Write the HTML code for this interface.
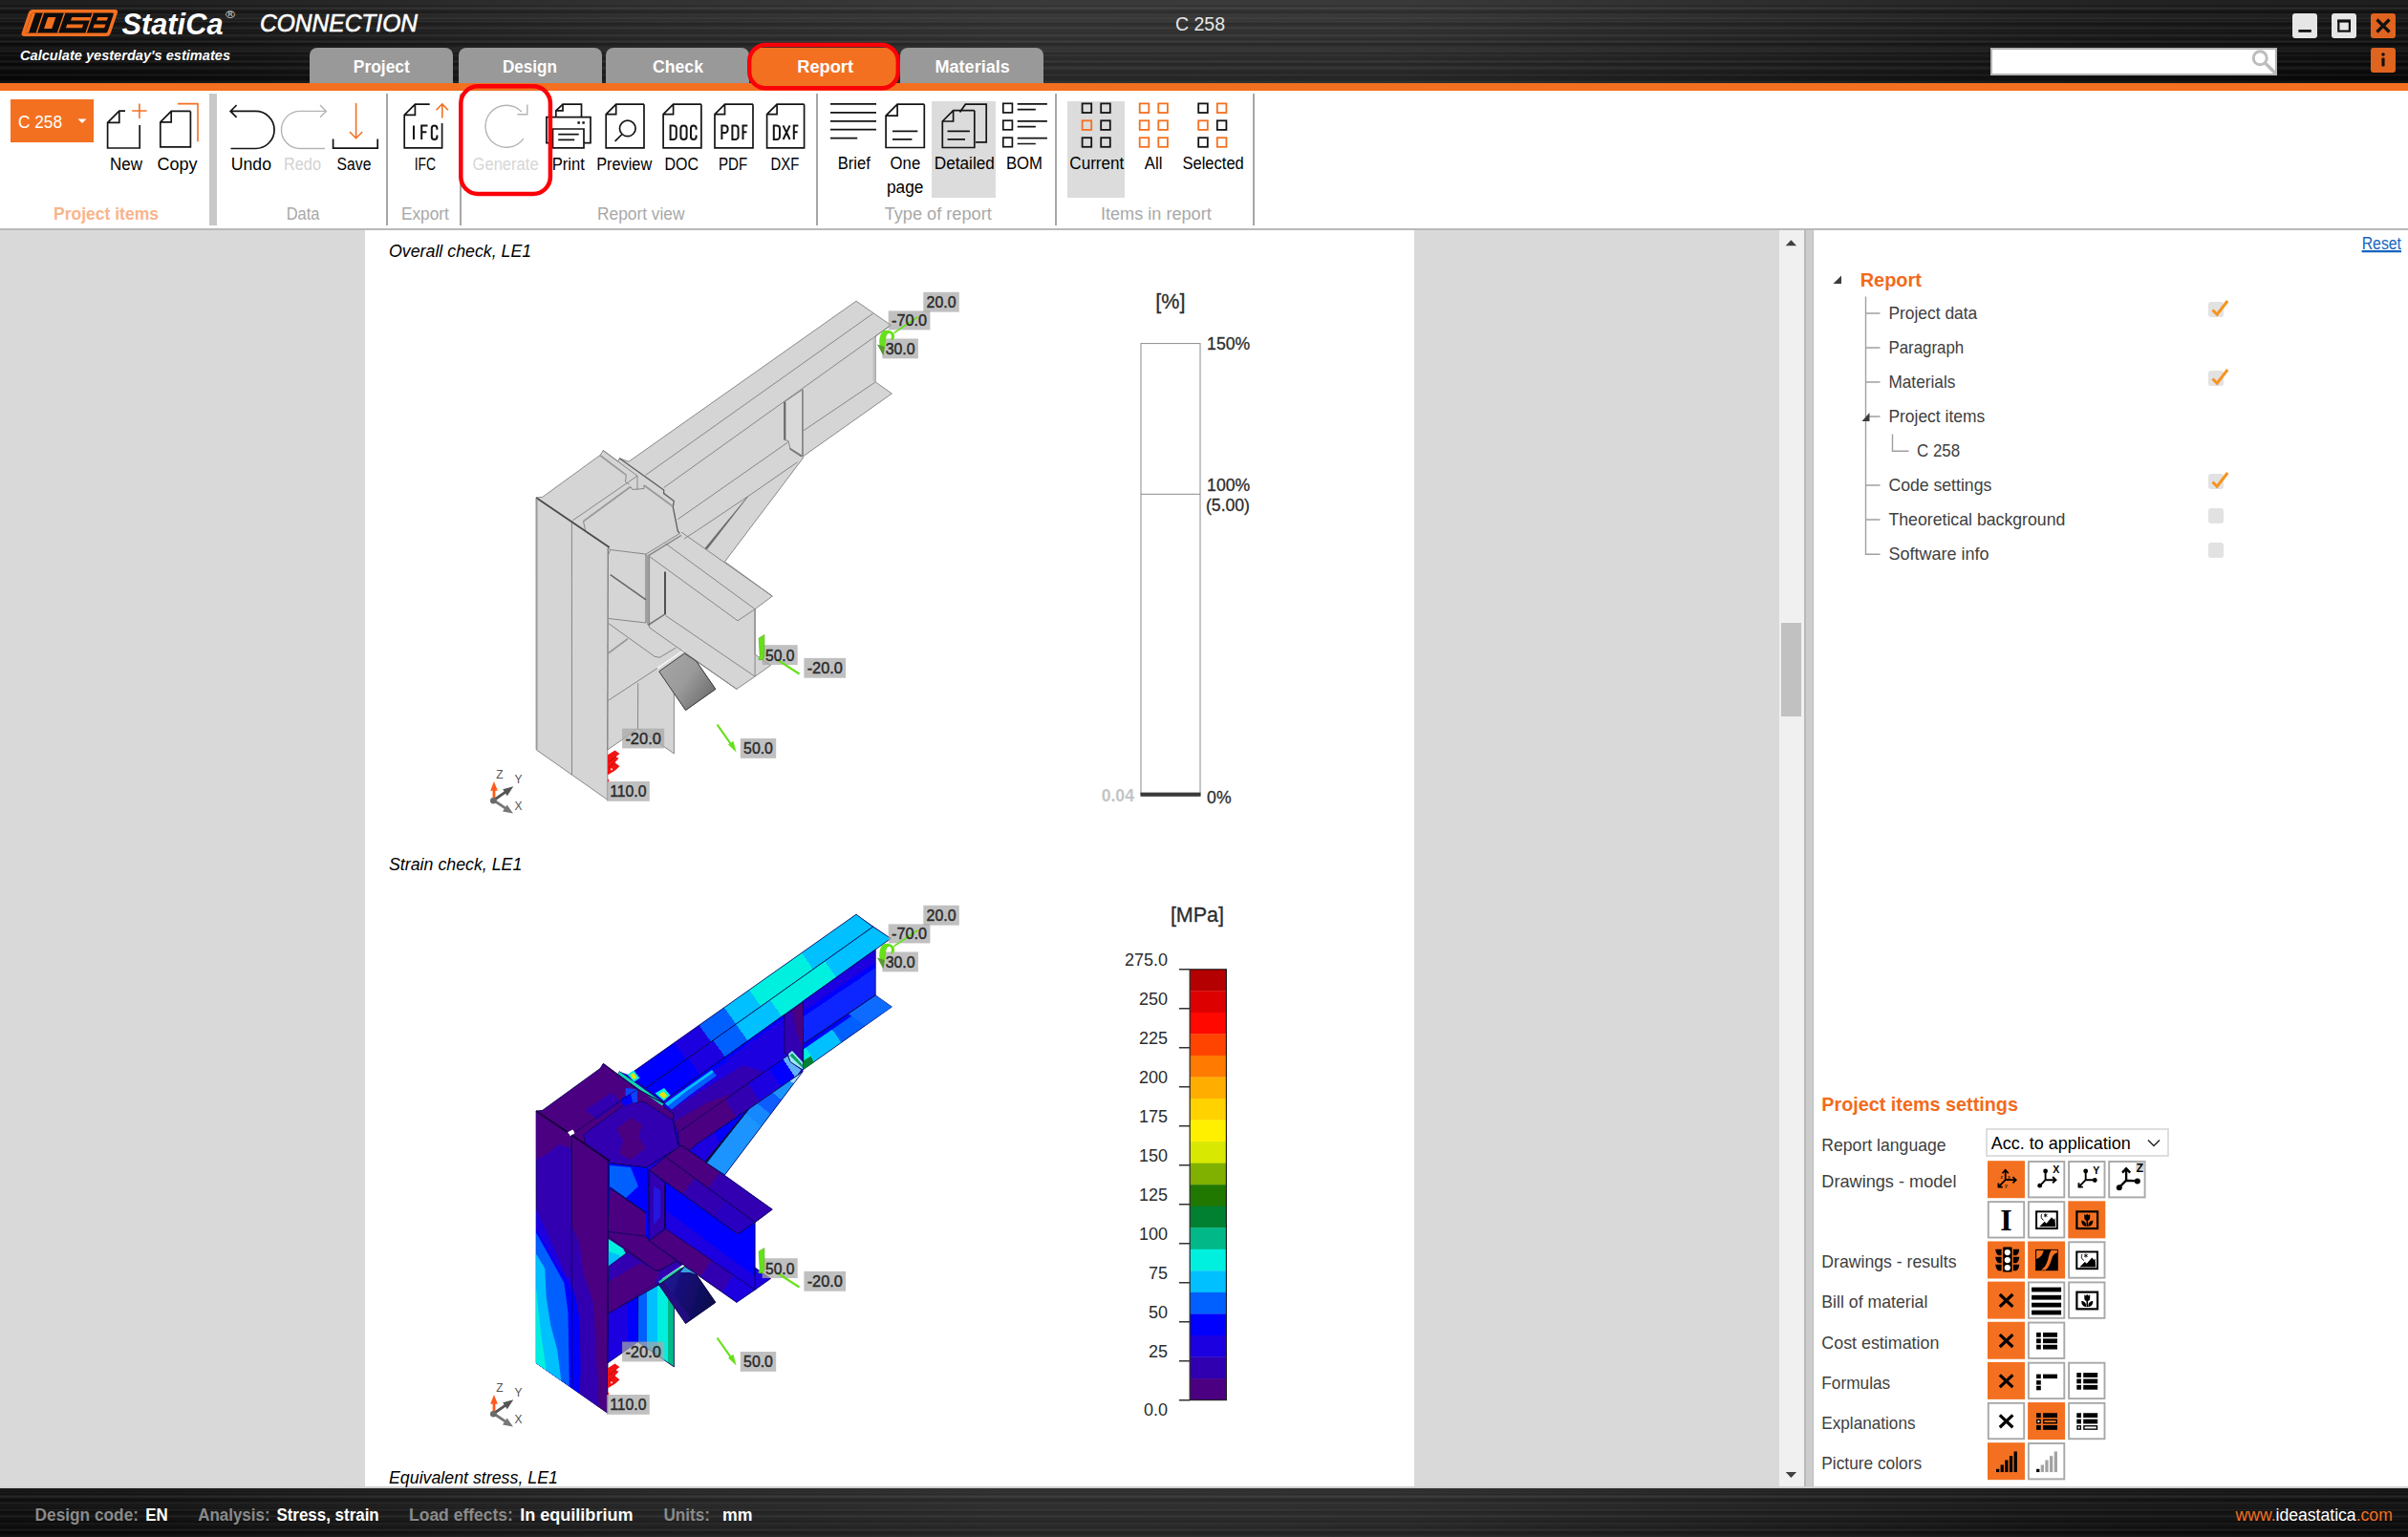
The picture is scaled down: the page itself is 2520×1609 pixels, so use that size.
<!DOCTYPE html>
<html lang="en"><head><meta charset="utf-8"><meta name="domain" content="Computer-Use"><title>IDEA StatiCa Connection - C 258</title>
<style>
html,body{margin:0;padding:0;}
body{width:2520px;height:1609px;overflow:hidden;position:relative;background:#fff;font-family:"Liberation Sans", sans-serif;}
.abs{position:absolute;}
#titlebar{left:0;top:0;width:2520px;height:87px;background:#0b0b0b;}
#titlebar .tex{position:absolute;left:0;top:0;width:100%;height:100%;
  background:
   linear-gradient(90deg, rgba(255,255,255,0) 0%, rgba(255,255,255,0.015) 8%, rgba(255,255,255,0.085) 26%, rgba(255,255,255,0.125) 42%, rgba(255,255,255,0.12) 58%, rgba(255,255,255,0.075) 72%, rgba(255,255,255,0.03) 84%, rgba(255,255,255,0.0) 100%),
   repeating-linear-gradient(180deg, rgba(0,0,0,0) 0px, rgba(0,0,0,0.30) 1.2px, rgba(0,0,0,0) 2.6px, rgba(0,0,0,0) 5px),
   repeating-linear-gradient(180deg, rgba(255,255,255,0) 0px, rgba(255,255,255,0.06) 1.5px, rgba(255,255,255,0) 3.5px, rgba(255,255,255,0) 7px),
   repeating-linear-gradient(180deg, rgba(0,0,0,0) 0px, rgba(0,0,0,0.45) 2px, rgba(0,0,0,0) 4.5px, rgba(0,0,0,0) 11px),
   repeating-linear-gradient(180deg, rgba(255,255,255,0) 0px, rgba(255,255,255,0.05) 2px, rgba(255,255,255,0) 5px, rgba(255,255,255,0) 17px),
   linear-gradient(180deg,#1e1e1e 0%,#161616 40%,#0e0e0e 75%,#070707 100%);}
#obar{left:0;top:87px;width:2520px;height:8px;background:#f37021;}
.tab{position:absolute;top:50px;height:37px;background:#999;border-radius:8px 8px 0 0;}
#ribbon{left:0;top:95px;width:2520px;height:144px;background:#fff;}
#ribline{left:0;top:239px;width:2520px;height:2px;background:#b9b9b9;}
#work{left:0;top:241px;width:1862px;height:1316px;background:#d9d9d9;}
#page{left:382px;top:241px;width:1098px;height:1316px;background:#fff;}
#vtrack{left:1862px;top:241px;width:26px;height:1316px;background:#f0f0f0;}
#vthumb{left:1864px;top:652px;width:21px;height:98px;background:#c1c1c1;}
#split{left:1888px;top:241px;width:10px;height:1316px;background:#cdcdcd;border-left:2px solid #b9b9b9;border-right:1px solid #bdbdbd;box-sizing:border-box;}
#side{left:1898px;top:241px;width:622px;height:1316px;background:#fff;}
#sline{left:0;top:1556px;width:2520px;height:2px;background:#d0d0d0;}
#status{left:0;top:1558px;width:2520px;height:51px;background:#0b0b0b;}
#status .tex{position:absolute;left:0;top:0;width:100%;height:100%;
  background:
   linear-gradient(90deg, rgba(255,255,255,0) 0%, rgba(255,255,255,0.015) 8%, rgba(255,255,255,0.08) 26%, rgba(255,255,255,0.115) 42%, rgba(255,255,255,0.11) 58%, rgba(255,255,255,0.07) 72%, rgba(255,255,255,0.03) 84%, rgba(255,255,255,0.0) 100%),
   repeating-linear-gradient(180deg, rgba(0,0,0,0) 0px, rgba(0,0,0,0.30) 1.2px, rgba(0,0,0,0) 2.6px, rgba(0,0,0,0) 5px),
   repeating-linear-gradient(180deg, rgba(255,255,255,0) 0px, rgba(255,255,255,0.06) 1.5px, rgba(255,255,255,0) 3.5px, rgba(255,255,255,0) 7px),
   repeating-linear-gradient(180deg, rgba(0,0,0,0) 0px, rgba(0,0,0,0.45) 2px, rgba(0,0,0,0) 4.5px, rgba(0,0,0,0) 11px),
   linear-gradient(180deg,#1a1a1a 0%,#141414 50%,#0a0a0a 100%);}
.sel{position:absolute;background:#dcdcdc;}
.vsep{position:absolute;top:98px;height:138px;width:2px;background:#a6a6a6;}
#ovl{position:absolute;left:0;top:0;width:2520px;height:1609px;}
#ovl text{font-family:"Liberation Sans", sans-serif;}
</style></head><body>

<div id="titlebar" class="abs"><div class="tex"></div></div>
<div id="obar" class="abs"></div>
<div class="tab" style="left:324px;width:150px;background:#999"></div>
<div class="tab" style="left:480px;width:150px;background:#999"></div>
<div class="tab" style="left:634px;width:150px;background:#999"></div>
<div class="tab" style="left:786px;width:152px;background:#f37021"></div>
<div class="tab" style="left:942px;width:150px;background:#999"></div>
<div id="ribbon" class="abs"></div><div id="ribline" class="abs"></div>
<div class="sel" style="left:975px;top:106px;width:67px;height:101px"></div>
<div class="sel" style="left:1117px;top:106px;width:60px;height:101px"></div>
<div class="abs" style="left:11px;top:104px;width:87px;height:45px;background:#f37021"></div>
<div class="abs" style="left:219px;top:98px;width:8px;height:138px;background:#c8c8c8"></div>
<div class="vsep" style="left:404px"></div>
<div class="vsep" style="left:481px"></div>
<div class="vsep" style="left:854px"></div>
<div class="vsep" style="left:1104px"></div>
<div class="vsep" style="left:1311px"></div>
<div id="work" class="abs"></div><div id="page" class="abs"></div>
<div id="vtrack" class="abs"></div><div id="vthumb" class="abs"></div><div id="split" class="abs"></div>
<div id="side" class="abs"></div>
<div id="sline" class="abs"></div><div id="status" class="abs"><div class="tex"></div></div>
<div class="abs" style="left:2399px;top:14px;width:26px;height:26px;background:#e6e6e6;border-radius:3px"></div>
<div class="abs" style="left:2440px;top:14px;width:26px;height:26px;background:#e6e6e6;border-radius:3px"></div>
<div class="abs" style="left:2481px;top:14px;width:26px;height:26px;background:#de6420;border-radius:3px"></div>
<div class="abs" style="left:2481px;top:50px;width:26px;height:26px;background:#de6420;border-radius:3px"></div>
<div class="abs" style="left:2083px;top:50px;width:300px;height:29px;background:#fff;border:2px solid #b4b4b4;box-sizing:border-box"></div>
<svg id="ovl" width="2520" height="1609" viewBox="0 0 2520 1609">
<rect x="2080" y="1215.2" width="39" height="39" fill="#f37021"/>
<g transform="translate(2080,1215.20)"><g stroke="#000" stroke-width="1.7" fill="none"><path d="M18.7 20 V9.8 M15.6 13 L18.7 9.6 L21.8 13 M18.7 20 H29.6 M26.4 16.8 L29.8 20 L26.4 23.2 M18.7 20 L11.6 27.2 M11.4 23.2 V27.4 H15.8"/></g><g font-size="5" font-weight="bold" fill="#3a1500"><text x="13.6" y="18.6">z</text><text x="21" y="18.4">x</text><text x="18" y="27.5">y</text></g></g>
<rect x="2122.9" y="1216.0" width="37.4" height="37.4" fill="#fff" stroke="#a8a8a8" stroke-width="1.9"/>
<g transform="translate(2122.1,1215.20)"><g stroke="#000" stroke-width="1.9" fill="none"><path d="M18.5 20 V11 M18.5 20 H29 M26 16.8 L29.4 20 L26 23.2 M18.5 20 L12.8 26"/></g><circle cx="18.5" cy="10.8" r="2.4"/><circle cx="12.6" cy="26" r="2.4"/><text x="26.2" y="12.7" font-size="10.5" font-weight="bold">X</text></g>
<rect x="2165.1000000000004" y="1216.0" width="37.4" height="37.4" fill="#fff" stroke="#a8a8a8" stroke-width="1.9"/>
<g transform="translate(2164.3,1215.20)"><g stroke="#000" stroke-width="1.9" fill="none"><path d="M18.4 20 V11 M18.4 20 H28 M18.4 20 L11.4 27.2 M11.2 23 V27.4 H15.6"/></g><circle cx="18.4" cy="10.8" r="2.4"/><circle cx="28" cy="20.3" r="2.4"/><text x="26" y="13.6" font-size="10.5" font-weight="bold">Y</text></g>
<rect x="2207.2000000000003" y="1216.0" width="37.4" height="37.4" fill="#fff" stroke="#a8a8a8" stroke-width="1.9"/>
<g transform="translate(2206.4,1215.20)"><g stroke="#000" stroke-width="2.4" fill="none"><path d="M18.7 20.5 V8.5 M14.6 12.4 L18.7 8 L22.8 12.4 M18.7 20.5 L30 21.2 M18.7 20.5 L11.6 27.6"/></g><circle cx="30.4" cy="21.3" r="3"/><circle cx="11.4" cy="28" r="3"/><rect x="29" y="1.5" width="9" height="8" fill="#cfcfcf"/><text x="29.2" y="11.5" font-size="12.5" font-weight="bold">Z</text></g>
<rect x="2080.8" y="1258.14" width="37.4" height="37.4" fill="#fff" stroke="#a8a8a8" stroke-width="1.9"/>
<g transform="translate(2080,1257.34)"><text x='19.6' y='31' style='font-family:&quot;Liberation Serif&quot;,serif' font-weight='bold' font-size='32' text-anchor='middle'>I</text></g>
<rect x="2122.9" y="1258.14" width="37.4" height="37.4" fill="#fff" stroke="#a8a8a8" stroke-width="1.9"/>
<g transform="translate(2122.1,1257.34)"><rect x="9" y="11" width="21.7" height="17.7" fill="#fff" stroke="#000" stroke-width="2"/><path d="M12 27 L17.5 21.5 L19.5 23.3 L25 17 L27 19.5 L28.3 18 L29 27 Z" fill="#000"/><path d="M14.6 13.5 A4.6 4.6 0 0 0 16.6 20.2 A5.4 5.4 0 0 1 14.6 13.5Z" fill="#000" stroke="#000" stroke-width="0.5"/><path d="M18.6 13 V17 M16.8 14 L20.4 16 M20.4 14 L16.8 16" stroke="#000" stroke-width="0.9"/></g>
<rect x="2164.3" y="1257.3400000000001" width="39" height="39" fill="#f37021"/>
<g transform="translate(2164.3,1257.34)"><rect x="9.1" y="11" width="21.7" height="17.7" fill="#f37021" stroke="#000" stroke-width="2.2"/><path d="M17 13.6 L18.4 15 L19.9 13.4 L21.4 15 L22.9 13.6 V17.5 A2.95 2.95 0 0 1 17 17.5Z" fill="#000"/><rect x="19.2" y="19.5" width="1.6" height="7" fill="#000"/><path d="M14 20.5 C17.5 20.5 19 23 19 26.5 C15.5 26.5 14 24 14 20.5Z M26 20.5 C22.5 20.5 21 23 21 26.5 C24.5 26.5 26 24 26 20.5Z" fill="#000"/></g>
<rect x="2080" y="1299.48" width="39" height="39" fill="#f37021"/>
<g transform="translate(2080,1299.48)"><rect x="16" y="6.1" width="9.6" height="26" rx="0.8" fill="#000"/><circle cx="20.8" cy="11.6" r="3.1" fill="#fff"/><circle cx="20.8" cy="19.6" r="3.1" fill="#fff"/><circle cx="20.8" cy="27.5" r="3.1" fill="#fff"/><path d="M8.2 8.2 H14.6 V14.799999999999999 H12.4 C10 14.799999999999999 8.6 11.7 8.2 8.2Z" fill="#000"/><path d="M33.2 8.2 H26.9 V14.799999999999999 H29.1 C31.5 14.799999999999999 32.9 11.7 33.2 8.2Z" fill="#000"/><path d="M8.2 16.2 H14.6 V22.799999999999997 H12.4 C10 22.799999999999997 8.6 19.7 8.2 16.2Z" fill="#000"/><path d="M33.2 16.2 H26.9 V22.799999999999997 H29.1 C31.5 22.799999999999997 32.9 19.7 33.2 16.2Z" fill="#000"/><path d="M8.2 24.2 H14.6 V30.799999999999997 H12.4 C10 30.799999999999997 8.6 27.7 8.2 24.2Z" fill="#000"/><path d="M33.2 24.2 H26.9 V30.799999999999997 H29.1 C31.5 30.799999999999997 32.9 27.7 33.2 24.2Z" fill="#000"/></g>
<rect x="2122.1" y="1299.48" width="39" height="39" fill="#f37021"/>
<g transform="translate(2122.1,1299.48)"><rect x="8" y="8.4" width="23.7" height="22.3" fill="#000"/><path d="M9 9.5 H16.5 C15.8 14 13.5 16.5 9 18.5Z" fill="#f37021"/><path d="M24.5 9.3 H30.8 V12 C27.5 12.5 26 15 24.8 19 C23.2 24.5 21.5 28 18.5 30 H13.8 C18.5 27 20 23 21.2 18.5 C22.3 14 23 11.5 24.5 9.3Z" fill="#f37021"/></g>
<rect x="2165.1000000000004" y="1300.28" width="37.4" height="37.4" fill="#fff" stroke="#a8a8a8" stroke-width="1.9"/>
<g transform="translate(2164.3,1299.48)"><rect x="9" y="11" width="21.7" height="17.7" fill="#fff" stroke="#000" stroke-width="2"/><path d="M12 27 L17.5 21.5 L19.5 23.3 L25 17 L27 19.5 L28.3 18 L29 27 Z" fill="#000"/><path d="M14.6 13.5 A4.6 4.6 0 0 0 16.6 20.2 A5.4 5.4 0 0 1 14.6 13.5Z" fill="#000" stroke="#000" stroke-width="0.5"/><path d="M18.6 13 V17 M16.8 14 L20.4 16 M20.4 14 L16.8 16" stroke="#000" stroke-width="0.9"/></g>
<rect x="2080" y="1341.6200000000001" width="39" height="39" fill="#f37021"/>
<g transform="translate(2080,1341.62)"><path d="M12.8 13.4 L26.4 26.2 M26.4 13.4 L12.8 26.2" stroke="#000" stroke-width="3.2" fill="none"/></g>
<rect x="2122.9" y="1342.42" width="37.4" height="37.4" fill="#fff" stroke="#a8a8a8" stroke-width="1.9"/>
<g transform="translate(2122.1,1341.62)"><rect x="4" y="6" width="31" height="4.8" fill="#000"/><rect x="4" y="14.2" width="31" height="4.8" fill="#000"/><rect x="4" y="22.1" width="31" height="4.8" fill="#000"/><rect x="4" y="30" width="31" height="4.8" fill="#000"/></g>
<rect x="2165.1000000000004" y="1342.42" width="37.4" height="37.4" fill="#fff" stroke="#a8a8a8" stroke-width="1.9"/>
<g transform="translate(2164.3,1341.62)"><rect x="9.1" y="11" width="21.7" height="17.7" fill="#fff" stroke="#000" stroke-width="2.2"/><path d="M17 13.6 L18.4 15 L19.9 13.4 L21.4 15 L22.9 13.6 V17.5 A2.95 2.95 0 0 1 17 17.5Z" fill="#000"/><rect x="19.2" y="19.5" width="1.6" height="7" fill="#000"/><path d="M14 20.5 C17.5 20.5 19 23 19 26.5 C15.5 26.5 14 24 14 20.5Z M26 20.5 C22.5 20.5 21 23 21 26.5 C24.5 26.5 26 24 26 20.5Z" fill="#000"/></g>
<rect x="2080" y="1383.76" width="39" height="39" fill="#f37021"/>
<g transform="translate(2080,1383.76)"><path d="M12.8 13.4 L26.4 26.2 M26.4 13.4 L12.8 26.2" stroke="#000" stroke-width="3.2" fill="none"/></g>
<rect x="2122.9" y="1384.56" width="37.4" height="37.4" fill="#fff" stroke="#a8a8a8" stroke-width="1.9"/>
<g transform="translate(2122.1,1383.76)"><rect x="9" y="11.2" width="4.7" height="4.8" fill="#000"/><rect x="15.9" y="11.2" width="15" height="4.8" fill="#000"/><rect x="9" y="17.6" width="4.7" height="4.8" fill="#000"/><rect x="15.9" y="17.6" width="15" height="4.8" fill="#000"/><rect x="9" y="24.0" width="4.7" height="4.8" fill="#000"/><rect x="15.9" y="24.0" width="15" height="4.8" fill="#000"/></g>
<rect x="2080" y="1425.9" width="39" height="39" fill="#f37021"/>
<g transform="translate(2080,1425.90)"><path d="M12.8 13.4 L26.4 26.2 M26.4 13.4 L12.8 26.2" stroke="#000" stroke-width="3.2" fill="none"/></g>
<rect x="2122.9" y="1426.7" width="37.4" height="37.4" fill="#fff" stroke="#a8a8a8" stroke-width="1.9"/>
<g transform="translate(2122.1,1425.90)"><rect x="9" y="12.7" width="4.7" height="4.5" fill="#000"/><rect x="15.9" y="12.7" width="15" height="4.5" fill="#000"/><rect x="9" y="19.2" width="4.7" height="4.5" fill="#000"/><rect x="9" y="24.9" width="4.7" height="4.5" fill="#000"/></g>
<rect x="2165.1000000000004" y="1426.7" width="37.4" height="37.4" fill="#fff" stroke="#a8a8a8" stroke-width="1.9"/>
<g transform="translate(2164.3,1425.90)"><rect x="9" y="11.2" width="4.7" height="4.8" fill="#000"/><rect x="15.9" y="11.2" width="15" height="4.8" fill="#000"/><rect x="9" y="17.6" width="4.7" height="4.8" fill="#000"/><rect x="15.9" y="17.6" width="15" height="4.8" fill="#000"/><rect x="9" y="24.0" width="4.7" height="4.8" fill="#000"/><rect x="15.9" y="24.0" width="15" height="4.8" fill="#000"/></g>
<rect x="2080.8" y="1468.84" width="37.4" height="37.4" fill="#fff" stroke="#a8a8a8" stroke-width="1.9"/>
<g transform="translate(2080,1468.04)"><path d="M12.8 13.4 L26.4 26.2 M26.4 13.4 L12.8 26.2" stroke="#000" stroke-width="3.2" fill="none"/></g>
<rect x="2122.1" y="1468.04" width="39" height="39" fill="#f37021"/>
<g transform="translate(2122.1,1468.04)"><rect x="9" y="11.2" width="4.7" height="4.8" fill="#000"/><rect x="15.9" y="11.2" width="15" height="4.8" fill="#000"/><rect x="9.7" y="18.3" width="3.3" height="3.4" fill="#fff" stroke="#000" stroke-width="1.4"/><rect x="16.6" y="18.3" width="13.6" height="3.4" fill="#f37021" stroke="#000" stroke-width="1.4"/><rect x="9" y="24.0" width="4.7" height="4.8" fill="#000"/><rect x="15.9" y="24.0" width="15" height="4.8" fill="#000"/></g>
<rect x="2165.1000000000004" y="1468.84" width="37.4" height="37.4" fill="#fff" stroke="#a8a8a8" stroke-width="1.9"/>
<g transform="translate(2164.3,1468.04)"><rect x="9" y="11.2" width="4.7" height="4.8" fill="#000"/><rect x="15.9" y="11.2" width="15" height="4.8" fill="#000"/><rect x="9" y="17.6" width="4.7" height="4.8" fill="#000"/><rect x="15.9" y="17.6" width="15" height="4.8" fill="#000"/><rect x="9.7" y="24.7" width="3.3" height="3.4" fill="#fff" stroke="#000" stroke-width="1.4"/><rect x="16.6" y="24.7" width="13.6" height="3.4" fill="#fff" stroke="#000" stroke-width="1.4"/></g>
<rect x="2080" y="1510.18" width="39" height="39" fill="#f37021"/>
<g transform="translate(2080,1510.18)"><rect x="9" y="27.6" width="3.3" height="3.3" fill="#000"/><rect x="13.6" y="23.3" width="3.3" height="7.6" fill="#000"/><rect x="18.2" y="18.3" width="3.3" height="12.6" fill="#000"/><rect x="22.9" y="14" width="3.3" height="16.9" fill="#000"/><rect x="27.6" y="9.3" width="3.3" height="21.6" fill="#000"/></g>
<rect x="2122.9" y="1510.98" width="37.4" height="37.4" fill="#fff" stroke="#a8a8a8" stroke-width="1.9"/>
<g transform="translate(2122.1,1510.18)"><rect x="9" y="27.6" width="3.3" height="3.3" fill="#000"/><rect x="13.6" y="23.3" width="3.3" height="7.6" fill="#a3a3a3"/><rect x="18.2" y="18.3" width="3.3" height="12.6" fill="#a3a3a3"/><rect x="22.9" y="14" width="3.3" height="16.9" fill="#a3a3a3"/><rect x="27.6" y="9.3" width="3.3" height="21.6" fill="#a3a3a3"/></g>
<text x="407" y="269" font-size="17.8" font-style="italic" fill="#000">Overall check, LE1</text>
<text x="407" y="911" font-size="17.8" font-style="italic" fill="#000">Strain check, LE1</text>
<text x="407" y="1553" font-size="17.8" font-style="italic" fill="#000">Equivalent stress, LE1</text>
<text x="1209.3" y="323.4" font-size="21.5" fill="#2c2c2c" stroke="#2c2c2c" stroke-width="0.3">[%]</text>
<rect x="1194" y="359.6" width="62" height="472.4" fill="#fff" stroke="#8a8a8a" stroke-width="1"/>
<path d="M1194 517.3 H1256" stroke="#8a8a8a" stroke-width="1"/>
<rect x="1193.5" y="829.6" width="63" height="4.2" fill="#3a3a3a"/>
<text x="1263.1" y="365.9" font-size="17.6" fill="#2c2c2c" stroke="#2c2c2c" stroke-width="0.3">150%</text>
<text x="1263.1" y="514.1" font-size="17.6" fill="#2c2c2c" stroke="#2c2c2c" stroke-width="0.3">100%</text>
<text x="1262" y="534.8" font-size="17.6" fill="#2c2c2c" stroke="#2c2c2c" stroke-width="0.3">(5.00)</text>
<text x="1263.1" y="840.8" font-size="17.6" fill="#2c2c2c" stroke="#2c2c2c" stroke-width="0.3">0%</text>
<text x="1152.7" y="838.8" font-size="17.6" fill="#c4c4c4" font-weight="bold">0.04</text>
<text x="1224.9" y="964.8" font-size="21.5" fill="#2c2c2c" stroke="#2c2c2c" stroke-width="0.3">[MPa]</text>
<rect x="1245.2" y="1014.80" width="38.2" height="22.84" fill="#b40000"/>
<rect x="1245.2" y="1037.34" width="38.2" height="22.84" fill="#dc0000"/>
<rect x="1245.2" y="1059.88" width="38.2" height="22.84" fill="#ff0800"/>
<rect x="1245.2" y="1082.42" width="38.2" height="22.84" fill="#ff4400"/>
<rect x="1245.2" y="1104.96" width="38.2" height="22.84" fill="#ff7a00"/>
<rect x="1245.2" y="1127.50" width="38.2" height="22.84" fill="#ffae00"/>
<rect x="1245.2" y="1150.04" width="38.2" height="22.84" fill="#ffd200"/>
<rect x="1245.2" y="1172.58" width="38.2" height="22.84" fill="#fff000"/>
<rect x="1245.2" y="1195.12" width="38.2" height="22.84" fill="#d8e800"/>
<rect x="1245.2" y="1217.66" width="38.2" height="22.84" fill="#80b000"/>
<rect x="1245.2" y="1240.20" width="38.2" height="22.84" fill="#207800"/>
<rect x="1245.2" y="1262.74" width="38.2" height="22.84" fill="#008030"/>
<rect x="1245.2" y="1285.28" width="38.2" height="22.84" fill="#00b888"/>
<rect x="1245.2" y="1307.82" width="38.2" height="22.84" fill="#00f0e0"/>
<rect x="1245.2" y="1330.36" width="38.2" height="22.84" fill="#00c0ff"/>
<rect x="1245.2" y="1352.90" width="38.2" height="22.84" fill="#0060ff"/>
<rect x="1245.2" y="1375.44" width="38.2" height="22.84" fill="#0000ff"/>
<rect x="1245.2" y="1397.98" width="38.2" height="22.84" fill="#1c00e0"/>
<rect x="1245.2" y="1420.52" width="38.2" height="22.84" fill="#3000b0"/>
<rect x="1245.2" y="1443.06" width="38.2" height="22.84" fill="#4b0082"/>
<rect x="1245.2" y="1014.8" width="38.2" height="450.8" fill="none" stroke="#222" stroke-width="1.2"/>
<path d="M1233.9 1014.8 H1245.2 M1233.9 1055.8 H1245.2 M1233.9 1096.8 H1245.2 M1233.9 1137.8 H1245.2 M1233.9 1178.8 H1245.2 M1233.9 1219.8 H1245.2 M1233.9 1260.8 H1245.2 M1233.9 1301.8 H1245.2 M1233.9 1342.8 H1245.2 M1233.9 1383.8 H1245.2 M1233.9 1424.8 H1245.2 M1233.9 1465.8 H1245.2" stroke="#333" stroke-width="1.4"/>
<text x="1222.1" y="1010.9" font-size="18" fill="#2c2c2c" text-anchor="end">275.0</text>
<text x="1222.1" y="1051.9" font-size="18" fill="#2c2c2c" text-anchor="end">250</text>
<text x="1222.1" y="1092.9" font-size="18" fill="#2c2c2c" text-anchor="end">225</text>
<text x="1222.1" y="1133.9" font-size="18" fill="#2c2c2c" text-anchor="end">200</text>
<text x="1222.1" y="1174.9" font-size="18" fill="#2c2c2c" text-anchor="end">175</text>
<text x="1222.1" y="1215.9" font-size="18" fill="#2c2c2c" text-anchor="end">150</text>
<text x="1222.1" y="1256.9" font-size="18" fill="#2c2c2c" text-anchor="end">125</text>
<text x="1222.1" y="1297.9" font-size="18" fill="#2c2c2c" text-anchor="end">100</text>
<text x="1222.1" y="1338.9" font-size="18" fill="#2c2c2c" text-anchor="end">75</text>
<text x="1222.1" y="1379.9" font-size="18" fill="#2c2c2c" text-anchor="end">50</text>
<text x="1222.1" y="1420.9" font-size="18" fill="#2c2c2c" text-anchor="end">25</text>
<text x="1222.1" y="1482" font-size="18" fill="#2c2c2c" text-anchor="end">0.0</text>
<defs><filter id="soft" x="-2%" y="-2%" width="104%" height="104%"><feGaussianBlur stdDeviation="0.5"/></filter></defs>
<g id="m1"><g filter="url(#soft)"><polygon points="896.0,315.2 932.3,340.4 916.2,352.0 916.2,399.9 933.3,412.0 840.7,477.6 840.2,479.7 758.5,588.0 808.3,624.1 790.1,637.7 790.1,685.0 806.5,696.5 790.1,708.2 770.9,721.4 728.6,692.1 748.8,721.4 717.5,743.5 705.4,724.8 705.4,788.9 667.5,762.8 635.8,785.0 635.8,837.3 561.2,784.9 561.1,521.1 567.6,520.4 628.2,476.4 631.2,471.5 646.6,482.9 648.3,479.7 657.9,483.3" fill="#d5d5d5" stroke="#7e7e7e" stroke-width="0.9" stroke-linejoin="round"/>
<polyline points="913.6,328.2 675.5,497.4" fill="none" stroke="#7e7e7e" stroke-width="0.9" />
<polyline points="932.3,340.4 694.7,510.5" fill="none" stroke="#7e7e7e" stroke-width="0.9" />
<polyline points="916.2,399.9 840.7,450.9" fill="none" stroke="#7e7e7e" stroke-width="0.9" />
<polyline points="824.5,463.0 709.4,543.6" fill="none" stroke="#7e7e7e" stroke-width="0.9" />
<polyline points="834.6,483.7 783.7,519.0 729.2,555.5 716.0,564.0" fill="none" stroke="#7e7e7e" stroke-width="0.9" />
<polyline points="914.7,353.5 914.7,399.0" fill="none" stroke="#bebebe" stroke-width="2.2" />
<polygon points="821.0,420.7 840.2,407.6 840.2,477.6 827.0,469.6 825.0,461.5 821.0,460.5" fill="#d9d9d9" stroke="#7e7e7e" stroke-width="0.9" />
<polyline points="821.3,420.7 821.3,460.5" fill="none" stroke="#6a6a6a" stroke-width="2.2" />
<polyline points="839.8,408.0 839.8,477.4" fill="none" stroke="#8a8a8a" stroke-width="1.6" />
<polyline points="826.5,469.5 839.0,477.8" fill="none" stroke="#777" stroke-width="1.8" />
<polygon points="783.7,519.0 781.5,520.5 737.5,574.0 739.8,575.5" fill="#6c6c6c" stroke="none" stroke-width="0.9" />
<polyline points="598.4,545.8 598.5,811.1" fill="none" stroke="#7e7e7e" stroke-width="0.9" />
<polyline points="636.3,573.5 635.8,785.0" fill="none" stroke="#7e7e7e" stroke-width="1.3" />
<polyline points="561.1,521.1 637.7,573.0" fill="none" stroke="#4a4a4a" stroke-width="1.8" />
<polyline points="561.7,522.0 561.7,784.5" fill="none" stroke="#9a9a9a" stroke-width="1.6" />
<polyline points="667.7,715.0 667.5,762.8" fill="none" stroke="#7e7e7e" stroke-width="0.9" />
<polyline points="599.4,544.8 667.0,498.2" fill="none" stroke="#7e7e7e" stroke-width="0.9" />
<polyline points="610.5,545.8 659.9,509.5" fill="none" stroke="#9a9a9a" stroke-width="1.8" />
<polyline points="628.1,476.7 655.4,497.4" fill="none" stroke="#9a9a9a" stroke-width="1.8" />
<polyline points="655.4,497.4 654.4,504.5 658.4,507.0" fill="none" stroke="#7e7e7e" stroke-width="0.9" />
<polyline points="631.2,471.5 667.0,498.2 667.0,512.5" fill="none" stroke="#7e7e7e" stroke-width="0.9" />
<polyline points="648.3,479.7 694.7,513.0 694.7,516.6 705.3,524.6 704.3,530.7 709.3,555.9 711.3,558.4" fill="none" stroke="#5e5e5e" stroke-width="1.3" />
<polyline points="674.0,508.0 704.3,530.2" fill="none" stroke="#9a9a9a" stroke-width="1.8" />
<polyline points="659.9,509.5 661.9,512.5 674.0,511.5 674.0,508.0" fill="none" stroke="#7e7e7e" stroke-width="0.9" />
<polyline points="610.5,545.8 612.5,554.9" fill="none" stroke="#7e7e7e" stroke-width="0.9" />
<polyline points="711.3,558.4 676.0,580.1 638.7,575.5 636.7,573.0" fill="none" stroke="#7e7e7e" stroke-width="0.9" />
<polyline points="713.0,560.3 678.0,582.0 678.0,654.0" fill="none" stroke="#8c8c8c" stroke-width="1.5" />
<polyline points="676.0,580.1 676.0,652.0" fill="none" stroke="#7e7e7e" stroke-width="1.2" />
<polyline points="638.7,575.5 636.8,580.0" fill="none" stroke="#7e7e7e" stroke-width="0.9" />
<polyline points="638.7,601.6 676.0,627.8" fill="none" stroke="#666" stroke-width="1.6" />
<polyline points="636.7,647.5 676.0,652.0" fill="none" stroke="#7e7e7e" stroke-width="0.9" />
<polyline points="636.7,652.5 685.1,687.3 690.2,688.3 707.3,678.2" fill="none" stroke="#7e7e7e" stroke-width="0.9" />
<polyline points="636.7,683.8 656.9,668.7" fill="none" stroke="#9a9a9a" stroke-width="1.8" />
<polyline points="636.7,733.2 685.1,701.4 715.4,680.8" fill="none" stroke="#7e7e7e" stroke-width="0.9" />
<polyline points="688.0,699.5 716.0,680.5" fill="none" stroke="#f4f4f4" stroke-width="1.6" />
<polyline points="679.2,582.2 772.0,649.8 790.1,637.7" fill="none" stroke="#7e7e7e" stroke-width="0.9" />
<polyline points="696.5,569.0 790.1,637.7" fill="none" stroke="#7e7e7e" stroke-width="0.9" />
<polyline points="713.0,557.0 808.3,624.1" fill="none" stroke="#7e7e7e" stroke-width="0.9" />
<polyline points="679.6,583.0 679.6,657.0" fill="none" stroke="#7e7e7e" stroke-width="0.9" />
<polyline points="696.0,598.6 696.0,643.5" fill="none" stroke="#4a4a4a" stroke-width="1.9" />
<polyline points="696.7,644.5 790.1,708.2" fill="none" stroke="#7e7e7e" stroke-width="0.9" />
<polyline points="679.6,657.0 770.9,721.4" fill="none" stroke="#7e7e7e" stroke-width="0.9" />
<polyline points="678.1,654.5 695.2,643.4" fill="none" stroke="#777" stroke-width="1.5" />
<polyline points="790.1,637.7 790.1,708.2" fill="none" stroke="#7e7e7e" stroke-width="0.9" />
<polyline points="772.0,649.8 772.0,650.0" fill="none" stroke="#7e7e7e" stroke-width="0.9" />
<defs><linearGradient id="blk" x1="0" y1="0" x2="1" y2="0.7"><stop offset="0" stop-color="#a8a8a8"/><stop offset="0.55" stop-color="#9a9a9a"/><stop offset="1" stop-color="#6e6e6e"/></linearGradient></defs>
<polygon points="689.7,702.9 716.4,684.0 728.6,692.1 748.8,721.4 717.5,743.5" fill="url(#blk)" stroke="#3c3c3c" stroke-width="1.0" /></g><rect x="966.3" y="305.8" width="37.5" height="20.8" fill="#a8a8a8" fill-opacity="0.72"/>
<rect x="929.7" y="325.4" width="43.7" height="20.0" fill="#a8a8a8" fill-opacity="0.72"/>
<rect x="923.4" y="354.5" width="37.5" height="20.8" fill="#a8a8a8" fill-opacity="0.72"/>
<rect x="797.7" y="675.2" width="37.0" height="20.8" fill="#a8a8a8" fill-opacity="0.72"/>
<rect x="841.4" y="688.9" width="43.7" height="20.8" fill="#a8a8a8" fill-opacity="0.72"/>
<rect x="651.1" y="762.6" width="44.1" height="20.8" fill="#a8a8a8" fill-opacity="0.72"/>
<rect x="774.8" y="773.0" width="37.4" height="20.8" fill="#a8a8a8" fill-opacity="0.72"/>
<rect x="634.9" y="818.0" width="44.9" height="20.8" fill="#a8a8a8" fill-opacity="0.72"/><path d="M935.5 348.6 L960.5 331.8" stroke="#66e01a" stroke-width="1.7" fill="none"/>
<path d="M928.5 345.8 C922 345 919.5 353 920.5 361 C921.2 366.5 923 370 924.5 371 L927.3 356 C927 352 928.5 348.5 931 349 C933 349.5 933.5 352.5 932 356.5 L935.5 355 C937.5 350.5 934.5 346 928.5 345.8Z" fill="#66e01a"/>
<path d="M918 360.5 L924.5 372.5 L925.8 363Z" fill="#5a9a30"/>
<path d="M794.1 668.1 L799.9 664.5 L799.9 686.8 L798.3 691 L793.6 690.5 L795.2 686.8Z" fill="#66e01a" stroke="#58b020" stroke-width="0.6"/>
<path d="M814 691 L836.5 705.5" stroke="#66e01a" stroke-width="2.1" fill="none"/>
<path d="M750.5 758.5 L768.5 784" stroke="#66e01a" stroke-width="2.1" fill="none"/><path d="M770.5 787.5 L762 779.5 L767.5 775.8Z" fill="#66e01a"/>
<path d="M636 790.3 L643.5 785.4 L648.5 788.9 L644.5 792.3 L647.5 793.8 L643.5 798.3 L648.5 802.3 L643.5 806.8 L636 811.3Z" fill="#f21414"/>
<path d="M637 797.5 L644.5 792.3 M637 804 L643.5 798.3" stroke="#c40c0c" stroke-width="1" fill="none"/>
<circle cx="640" cy="805.3" r="1.1" fill="#ffd8d8"/>
<path d="M636.2 815.5 L637.4 816.2 L637 818.6 L636 818Z" fill="#f21414"/><text x="969.6" y="322.2" font-size="17" fill="#2a2a2a" stroke="#2a2a2a" stroke-width="0.45" textLength="30.9" lengthAdjust="spacingAndGlyphs">20.0</text>
<text x="933.0" y="341.0" font-size="17" fill="#2a2a2a" stroke="#2a2a2a" stroke-width="0.45" textLength="37.1" lengthAdjust="spacingAndGlyphs">-70.0</text>
<text x="926.7" y="370.9" font-size="17" fill="#2a2a2a" stroke="#2a2a2a" stroke-width="0.45" textLength="30.9" lengthAdjust="spacingAndGlyphs">30.0</text>
<text x="801.0" y="691.6" font-size="17" fill="#2a2a2a" stroke="#2a2a2a" stroke-width="0.45" textLength="30.4" lengthAdjust="spacingAndGlyphs">50.0</text>
<text x="844.7" y="705.3" font-size="17" fill="#2a2a2a" stroke="#2a2a2a" stroke-width="0.45" textLength="37.1" lengthAdjust="spacingAndGlyphs">-20.0</text>
<text x="654.4" y="779.0" font-size="17" fill="#2a2a2a" stroke="#2a2a2a" stroke-width="0.45" textLength="37.5" lengthAdjust="spacingAndGlyphs">-20.0</text>
<text x="778.1" y="789.4" font-size="17" fill="#2a2a2a" stroke="#2a2a2a" stroke-width="0.45" textLength="30.8" lengthAdjust="spacingAndGlyphs">50.0</text>
<text x="638.2" y="834.4" font-size="17" fill="#2a2a2a" stroke="#2a2a2a" stroke-width="0.45" textLength="38.3" lengthAdjust="spacingAndGlyphs">110.0</text><g>
<path d="M517 836 L517 826" stroke="#ff5a1a" stroke-width="2.8"/><path d="M513.2 827.8 L517 818 L520.8 827.8Z" fill="#ff5a1a"/>
<path d="M517 837.5 L529 829.2" stroke="#555" stroke-width="2.8"/><path d="M537.3 823.3 L526.2 826.2 L530.8 833.2Z" fill="#555"/>
<path d="M517 838 L529 846.2" stroke="#777" stroke-width="2.8"/><path d="M537 851.6 L530.6 842.6 L526 849.4Z" fill="#777"/>
<circle cx="516.3" cy="838.2" r="3.3" fill="#6a6a6a"/>
<g font-size="12" fill="#555"><text x="519.2" y="814.6">Z</text><text x="538.4" y="820.2">Y</text><text x="538.6" y="848.2">X</text></g>
</g></g>
<g id="m2" transform="translate(0,642.0)"><g filter="url(#soft)"><defs><linearGradient id="cg1" gradientUnits="userSpaceOnUse" x1="657.9" y1="483.3" x2="896" y2="315.2"><stop offset="0.000" stop-color="#0000ff"/><stop offset="0.200" stop-color="#0000ff"/><stop offset="0.200" stop-color="#1c00e0"/><stop offset="0.310" stop-color="#1c00e0"/><stop offset="0.310" stop-color="#0060ff"/><stop offset="0.420" stop-color="#0060ff"/><stop offset="0.420" stop-color="#00c0ff"/><stop offset="0.530" stop-color="#00c0ff"/><stop offset="0.530" stop-color="#00f0e0"/><stop offset="0.760" stop-color="#00f0e0"/><stop offset="0.760" stop-color="#00c0ff"/><stop offset="1.000" stop-color="#00c0ff"/></linearGradient><linearGradient id="cg2" gradientUnits="userSpaceOnUse" x1="694.7" y1="510.5" x2="932.3" y2="340.4"><stop offset="0.000" stop-color="#0000ff"/><stop offset="0.160" stop-color="#0000ff"/><stop offset="0.160" stop-color="#1c00e0"/><stop offset="0.270" stop-color="#1c00e0"/><stop offset="0.270" stop-color="#0060ff"/><stop offset="0.370" stop-color="#0060ff"/><stop offset="0.370" stop-color="#00c0ff"/><stop offset="0.520" stop-color="#00c0ff"/><stop offset="0.520" stop-color="#00f0e0"/><stop offset="0.760" stop-color="#00f0e0"/><stop offset="0.760" stop-color="#00c0ff"/><stop offset="1.000" stop-color="#00c0ff"/></linearGradient><linearGradient id="cg3" gradientUnits="userSpaceOnUse" x1="878" y1="379" x2="888.5" y2="394.5"><stop offset="0.000" stop-color="#1c00e0"/><stop offset="0.550" stop-color="#1c00e0"/><stop offset="0.550" stop-color="#0000ff"/><stop offset="0.800" stop-color="#0000ff"/><stop offset="0.800" stop-color="#0a28ff"/><stop offset="1.000" stop-color="#0a28ff"/></linearGradient><linearGradient id="cg4" gradientUnits="userSpaceOnUse" x1="755" y1="466" x2="768" y2="487"><stop offset="0.000" stop-color="#0000ff"/><stop offset="0.250" stop-color="#0000ff"/><stop offset="0.250" stop-color="#1c00e0"/><stop offset="0.720" stop-color="#1c00e0"/><stop offset="0.720" stop-color="#3000b0"/><stop offset="1.000" stop-color="#3000b0"/></linearGradient><linearGradient id="cg5" gradientUnits="userSpaceOnUse" x1="840.7" y1="464" x2="925" y2="406"><stop offset="0.000" stop-color="#00f0e0"/><stop offset="0.070" stop-color="#00f0e0"/><stop offset="0.070" stop-color="#00c0ff"/><stop offset="0.400" stop-color="#00c0ff"/><stop offset="0.400" stop-color="#0060ff"/><stop offset="1.000" stop-color="#0060ff"/></linearGradient><linearGradient id="cg6" gradientUnits="userSpaceOnUse" x1="712" y1="552" x2="836" y2="470"><stop offset="0.000" stop-color="#4b0082"/><stop offset="0.420" stop-color="#4b0082"/><stop offset="0.420" stop-color="#3000b0"/><stop offset="0.620" stop-color="#3000b0"/><stop offset="0.620" stop-color="#1c00e0"/><stop offset="0.800" stop-color="#1c00e0"/><stop offset="0.800" stop-color="#0000ff"/><stop offset="0.920" stop-color="#0000ff"/><stop offset="0.920" stop-color="#60b0ff"/><stop offset="1.000" stop-color="#60b0ff"/></linearGradient><linearGradient id="cg7" gradientUnits="userSpaceOnUse" x1="838" y1="481" x2="752" y2="584"><stop offset="0.000" stop-color="#a0dcff"/><stop offset="0.100" stop-color="#a0dcff"/><stop offset="0.100" stop-color="#1a94ff"/><stop offset="0.260" stop-color="#1a94ff"/><stop offset="0.260" stop-color="#0a5cff"/><stop offset="0.400" stop-color="#0a5cff"/><stop offset="0.400" stop-color="#1488ff"/><stop offset="0.520" stop-color="#1488ff"/><stop offset="0.520" stop-color="#1a94ff"/><stop offset="1.000" stop-color="#1a94ff"/></linearGradient><linearGradient id="cg8" gradientUnits="userSpaceOnUse" x1="728" y1="556" x2="775" y2="535"><stop offset="0.000" stop-color="#1c00e0"/><stop offset="0.450" stop-color="#1c00e0"/><stop offset="0.450" stop-color="#0000ff"/><stop offset="1.000" stop-color="#0000ff"/></linearGradient><linearGradient id="cg9" gradientUnits="userSpaceOnUse" x1="636" y1="760" x2="706" y2="760"><stop offset="0.000" stop-color="#1c00e0"/><stop offset="0.300" stop-color="#1c00e0"/><stop offset="0.300" stop-color="#0000ff"/><stop offset="0.460" stop-color="#0000ff"/><stop offset="0.460" stop-color="#0060ff"/><stop offset="0.580" stop-color="#0060ff"/><stop offset="0.580" stop-color="#00c0ff"/><stop offset="0.740" stop-color="#00c0ff"/><stop offset="0.740" stop-color="#00f0e0"/><stop offset="0.900" stop-color="#00f0e0"/><stop offset="0.900" stop-color="#00b888"/><stop offset="1.000" stop-color="#00b888"/></linearGradient><linearGradient id="cg10" gradientUnits="userSpaceOnUse" x1="705" y1="563" x2="800" y2="630"><stop offset="0.000" stop-color="#4b0082"/><stop offset="0.450" stop-color="#4b0082"/><stop offset="0.450" stop-color="#3000b0"/><stop offset="1.000" stop-color="#3000b0"/></linearGradient><linearGradient id="cg11" gradientUnits="userSpaceOnUse" x1="688" y1="576" x2="781" y2="644"><stop offset="0.000" stop-color="#4b0082"/><stop offset="0.350" stop-color="#4b0082"/><stop offset="0.350" stop-color="#3000b0"/><stop offset="0.700" stop-color="#3000b0"/><stop offset="0.700" stop-color="#2a00c0"/><stop offset="1.000" stop-color="#2a00c0"/></linearGradient><linearGradient id="cg12" gradientUnits="userSpaceOnUse" x1="688" y1="651" x2="780" y2="715"><stop offset="0.000" stop-color="#4b0082"/><stop offset="0.550" stop-color="#4b0082"/><stop offset="0.550" stop-color="#3000b0"/><stop offset="0.800" stop-color="#3000b0"/><stop offset="0.800" stop-color="#1c00e0"/><stop offset="1.000" stop-color="#1c00e0"/></linearGradient><linearGradient id="cg13" gradientUnits="userSpaceOnUse" x1="689.7" y1="702.9" x2="748.8" y2="721.4"><stop offset="0" stop-color="#22189c"/><stop offset="0.35" stop-color="#17107a"/><stop offset="1" stop-color="#0b0a4a"/></linearGradient></defs><polygon points="896.0,315.2 932.3,340.4 916.2,352.0 916.2,399.9 933.3,412.0 840.7,477.6 840.2,479.7 758.5,588.0 808.3,624.1 790.1,637.7 790.1,685.0 806.5,696.5 790.1,708.2 770.9,721.4 728.6,692.1 748.8,721.4 717.5,743.5 705.4,724.8 705.4,788.9 667.5,762.8 635.8,785.0 635.8,837.3 561.2,784.9 561.1,521.1 567.6,520.4 628.2,476.4 631.2,471.5 646.6,482.9 648.3,479.7 657.9,483.3" fill="#1c00e0" stroke="none" stroke-width="0.9" />
<polygon points="896.0,315.2 913.6,328.2 675.5,497.4 657.9,483.3" fill="url(#cg1)" stroke="#0a0a50" stroke-width="0.8" stroke-linejoin="round"/>
<polygon points="913.6,328.2 932.3,340.4 694.7,510.5 675.5,497.4" fill="url(#cg2)" stroke="#0a0a50" stroke-width="0.8" stroke-linejoin="round"/>
<polygon points="840.2,406.3 916.2,352.0 916.2,399.9 840.7,450.9" fill="url(#cg3)" stroke="#0a0a50" stroke-width="0.8" stroke-linejoin="round"/>
<polygon points="694.7,510.5 821.0,420.1 821.0,460.5 824.5,463.0 709.4,543.6 704.3,530.7 705.3,524.6 694.7,516.6" fill="url(#cg4)" stroke="#0a0a50" stroke-width="0.8" stroke-linejoin="round"/>
<polygon points="709.4,543.6 706.0,532.0 740.0,512.0 770.0,502.0" fill="#4b0082" stroke="none" stroke-width="0.9" />
<polygon points="760.0,467.5 821.0,424.0 821.0,460.5 824.5,463.0 800.0,480.0" fill="#1c00e0" stroke="none" stroke-width="0.9" />
<polygon points="696.0,513.0 716.0,498.5 745.0,478.0 747.0,480.5 718.0,501.0 699.0,516.0" fill="#00c0ff" stroke="none" stroke-width="0.9" />
<polygon points="699.0,516.0 718.0,501.0 747.0,480.5 750.0,484.0 721.0,505.0 703.0,519.5" fill="#0060ff" stroke="none" stroke-width="0.9" />
<polygon points="916.2,399.9 933.3,412.0 840.7,477.6 840.7,450.9" fill="url(#cg5)" stroke="#0a0a50" stroke-width="0.8" stroke-linejoin="round"/>
<polygon points="840.7,450.9 916.2,399.9 919.5,402.3 840.7,456.5" fill="#0000ff" stroke="none" stroke-width="0.9" />
<polygon points="840.7,468.5 848.5,463.5 852.0,470.0 840.7,477.6" fill="#008030" stroke="none" stroke-width="0.9" />
<polygon points="916.2,399.9 933.3,412.0 905.0,431.5 888.0,419.5" fill="#0a6cff" stroke="none" stroke-width="0.9" />
<polyline points="916.2,399.9 840.7,450.9" fill="none" stroke="#0a0a50" stroke-width="0.8" />
<polygon points="821.0,420.7 840.2,407.6 840.2,477.6 827.0,469.6 825.0,461.5 821.0,460.5" fill="#3000b0" stroke="#0a0a50" stroke-width="0.8" stroke-linejoin="round"/>
<polygon points="829.0,415.5 840.2,407.6 840.2,455.0 834.0,440.0" fill="#4b0082" stroke="none" stroke-width="0.9" />
<polygon points="825.0,461.5 829.0,458.0 840.2,470.0 840.2,477.6 827.0,469.6" fill="#9ae8ff" stroke="none" stroke-width="0.9" />
<polygon points="826.5,463.0 829.0,460.5 840.0,472.5 840.0,476.0" fill="#10a060" stroke="none" stroke-width="0.9" />
<polygon points="824.5,463.0 827.0,469.6 839.0,477.8 834.6,483.7 783.7,519.0 729.2,555.5 721.4,562.4 713.0,557.0 711.3,558.4 709.4,543.6" fill="url(#cg6)" stroke="#0a0a50" stroke-width="0.8" stroke-linejoin="round"/>
<polygon points="840.2,479.7 758.5,588.0 738.7,575.0 783.7,519.0 834.6,483.7" fill="url(#cg7)" stroke="#0a0a50" stroke-width="0.8" stroke-linejoin="round"/>
<polygon points="783.7,519.0 738.7,575.0 721.4,562.4 729.2,555.5" fill="url(#cg8)" stroke="#0a0a50" stroke-width="0.8" stroke-linejoin="round"/>
<polygon points="783.7,519.0 781.3,520.5 737.5,574.0 739.8,575.5" fill="#0a0a3c" stroke="none" stroke-width="0.9" />
<polygon points="561.1,521.1 598.4,545.8 598.5,811.1 561.2,784.9" fill="#3000b0" stroke="#0a0a50" stroke-width="0.8" stroke-linejoin="round"/>
<polygon points="561.1,624.3 593.4,694.9 598.4,695.9 598.5,811.1 561.1,784.9" fill="#1c00e0" stroke="none" stroke-width="0.9" />
<polygon points="561.1,644.5 580.3,678.7 593.4,697.9 598.4,714.0 598.5,811.1 561.1,784.9" fill="#0000ff" stroke="none" stroke-width="0.9" />
<polygon points="561.1,648.5 579.2,680.8 590.3,700.9 594.4,731.2 595.9,809.3 561.1,784.9" fill="#0060ff" stroke="none" stroke-width="0.9" />
<polygon points="561.1,670.7 570.2,685.8 571.7,716.0 576.2,745.0 583.3,771.5 587.3,803.3 561.1,784.9" fill="#00c0ff" stroke="none" stroke-width="0.9" />
<polygon points="561.1,706.0 564.1,736.2 567.1,761.4 571.7,792.3 561.1,784.9" fill="#00f0e0" stroke="none" stroke-width="0.9" />
<polygon points="561.1,521.1 598.4,545.8 598.4,560.0 585.0,556.0 572.0,566.0 561.1,572.0" fill="#4b0082" stroke="none" stroke-width="0.9" />
<polygon points="598.4,545.8 637.0,573.0 635.8,837.3 598.5,811.1" fill="#4b0082" stroke="#0a0a50" stroke-width="0.8" stroke-linejoin="round"/>
<polygon points="598.5,640.4 606.5,660.6 610.5,690.8 620.6,721.1 622.6,751.3 625.1,801.8 626.6,830.9 598.5,811.1" fill="#3000b0" stroke="none" stroke-width="0.9" />
<polygon points="598.5,700.9 603.4,721.1 606.5,741.3 607.5,791.7 606.5,816.8 598.5,811.1" fill="#0000ff" stroke="none" stroke-width="0.9" />
<polygon points="561.1,521.1 567.6,520.4 628.2,476.4 631.2,471.5 646.6,482.9 648.3,479.7 694.7,513.0 694.7,516.6 705.3,524.6 704.3,530.7 709.3,555.9 711.3,558.4 676.0,580.1 638.7,575.5 637.7,573.0" fill="#4b0082" stroke="#0a0a50" stroke-width="0.8" stroke-linejoin="round"/>
<polygon points="610.5,545.8 659.9,509.5 661.9,512.5 674.0,511.5 704.3,530.7 709.3,555.9 711.3,558.4 676.0,580.1 638.7,575.5 612.5,554.9" fill="#3000b0" stroke="#0a0a50" stroke-width="0.7" />
<polygon points="645.0,540.0 660.0,528.0 672.0,535.0 668.0,548.0 676.0,560.0 660.0,572.0 648.0,566.0 652.0,552.0" fill="#4b0082" stroke="none" stroke-width="0.9" />
<polygon points="612.5,520.0 640.0,502.0 650.0,512.0 625.0,530.0" fill="#3000b0" stroke="none" stroke-width="0.9" />
<polygon points="655.0,497.0 667.0,498.2 667.0,512.0 661.9,512.5 654.4,504.5" fill="#1040ff" stroke="none" stroke-width="0.9" />
<polygon points="650.0,508.0 660.0,503.0 662.0,512.0 652.0,516.0" fill="#0000ff" stroke="none" stroke-width="0.9" />
<polygon points="648.3,479.7 694.7,513.0 693.0,515.5 646.8,482.5" fill="#10d8b0" stroke="none" stroke-width="0.9" />
<polygon points="656.5,483.0 663.0,478.5 669.5,486.5 663.5,490.5" fill="#00f0e0" stroke="none" stroke-width="0.9" />
<polygon points="659.5,483.5 663.0,481.0 666.5,486.0 663.0,488.2" fill="#e8e000" stroke="none" stroke-width="0.9" />
<polygon points="685.5,502.5 695.0,497.0 701.5,504.5 694.7,510.5" fill="#00f0e0" stroke="none" stroke-width="0.9" />
<polygon points="689.5,503.5 694.5,500.5 698.5,505.0 694.5,508.2" fill="#e8e000" stroke="none" stroke-width="0.9" />
<polyline points="561.1,521.1 637.7,573.0" fill="none" stroke="#16003a" stroke-width="1.8" />
<polyline points="599.4,544.8 667.0,498.2" fill="none" stroke="#0a0a50" stroke-width="0.8" />
<polyline points="631.2,471.5 667.0,498.2 694.7,513.0" fill="none" stroke="#1a0050" stroke-width="1.2" />
<polygon points="594.0,543.2 599.5,540.6 601.5,544.3 597.0,547.3" fill="#fff" stroke="none" stroke-width="0.9" />
<polygon points="636.5,574.0 638.7,575.5 676.0,580.1 678.0,582.0 679.6,657.0 636.7,652.0" fill="#0000ff" stroke="#0a0a50" stroke-width="0.8" stroke-linejoin="round"/>
<polygon points="638.0,578.0 660.0,580.0 668.0,600.0 655.0,612.0 638.0,600.0" fill="#0060ff" stroke="none" stroke-width="0.9" />
<polygon points="638.7,601.6 676.0,627.8 676.0,652.0 636.7,647.5 636.7,640.0" fill="#4b0082" stroke="none" stroke-width="0.9" />
<polyline points="638.7,601.6 676.0,627.8" fill="none" stroke="#0a0a50" stroke-width="1.4" />
<polygon points="636.7,647.5 676.0,652.0 679.6,657.0 716.4,684.0 689.7,702.9 636.7,733.2" fill="#4b0082" stroke="#0a0a50" stroke-width="0.8" stroke-linejoin="round"/>
<polygon points="636.7,655.0 652.0,665.0 660.0,680.0 636.7,697.0" fill="#00f0e0" stroke="none" stroke-width="0.9" />
<polygon points="636.7,668.0 648.0,672.0 652.0,684.0 636.7,694.0" fill="#00c0ff" stroke="none" stroke-width="0.9" />
<polygon points="636.7,683.8 656.9,668.7 685.1,687.3 690.2,688.3 707.3,678.2 716.4,684.0 689.7,702.9 685.0,701.4 636.7,733.2" fill="#3000b0" stroke="#0a0a50" stroke-width="0.7" />
<polygon points="636.7,700.0 670.0,680.0 690.0,690.0 685.0,701.4 636.7,733.2" fill="#4b0082" stroke="none" stroke-width="0.9" />
<polyline points="636.7,652.5 685.1,687.3 690.2,688.3 707.3,678.2" fill="none" stroke="#0a0a50" stroke-width="0.8" />
<polygon points="693.0,696.5 716.0,681.0 717.0,683.0 694.0,698.5" fill="#e8fff8" stroke="none" stroke-width="0.9" />
<polygon points="689.0,699.5 712.0,684.5 714.0,687.0 691.0,702.0" fill="#20c8a0" stroke="none" stroke-width="0.9" />
<polygon points="636.2,733.2 689.7,702.9 705.4,724.8 705.4,788.9 667.5,762.8 635.8,785.0" fill="url(#cg9)" stroke="#0a0a50" stroke-width="0.8" stroke-linejoin="round"/>
<polyline points="667.7,715.0 667.5,762.8" fill="none" stroke="#0a0a50" stroke-width="0.8" />
<polyline points="636.3,573.5 635.8,785.0" fill="none" stroke="#0a0a50" stroke-width="1.0" />
<polyline points="598.4,545.8 598.5,811.1" fill="none" stroke="#0a0a50" stroke-width="0.9" />
<polygon points="713.0,557.0 808.3,624.1 790.1,637.7 696.5,569.0" fill="url(#cg10)" stroke="#0a0a50" stroke-width="0.8" stroke-linejoin="round"/>
<polygon points="696.5,569.0 790.1,637.7 772.0,649.8 679.6,583.0" fill="url(#cg11)" stroke="#0a0a50" stroke-width="0.8" stroke-linejoin="round"/>
<polygon points="679.6,583.0 696.0,596.0 696.0,643.5 679.6,657.0" fill="#3000b0" stroke="#0a0a50" stroke-width="0.8" stroke-linejoin="round"/>
<polygon points="684.0,600.0 691.0,604.0 691.0,632.0 684.0,640.0" fill="#2418e0" stroke="none" stroke-width="0.9" />
<polygon points="696.0,595.0 772.0,649.8 790.1,637.7 790.1,708.2 696.7,644.5" fill="#0000ff" stroke="#0a0a50" stroke-width="0.8" stroke-linejoin="round"/>
<polygon points="696.5,625.0 720.0,642.0 760.0,672.0 790.1,694.0 790.1,708.2 696.7,644.5" fill="#1c00e0" stroke="none" stroke-width="0.9" />
<polygon points="679.6,657.0 696.7,644.5 790.1,708.2 770.9,721.4" fill="url(#cg12)" stroke="#0a0a50" stroke-width="0.8" stroke-linejoin="round"/>
<polygon points="790.1,685.0 806.5,696.5 790.1,708.2" fill="#1c00e0" stroke="#0a0a50" stroke-width="0.8" stroke-linejoin="round"/>
<polyline points="696.0,598.6 696.0,643.5" fill="none" stroke="#12003a" stroke-width="1.6" />
<polygon points="689.7,702.9 716.4,684.0 728.6,692.1 748.8,721.4 717.5,743.5" fill="url(#cg13)" stroke="#080830" stroke-width="1.0" />
<polygon points="689.7,702.9 695.0,700.0 722.0,737.0 717.5,743.5" fill="#231080" stroke="none" stroke-width="0.9" />
<polygon points="716.4,684.0 728.6,692.1 722.0,690.0 712.0,690.0" fill="#38a0e0" stroke="none" stroke-width="0.9" /></g><rect x="966.3" y="305.8" width="37.5" height="20.8" fill="#a8a8a8" fill-opacity="0.72"/>
<rect x="929.7" y="325.4" width="43.7" height="20.0" fill="#a8a8a8" fill-opacity="0.72"/>
<rect x="923.4" y="354.5" width="37.5" height="20.8" fill="#a8a8a8" fill-opacity="0.72"/>
<rect x="797.7" y="675.2" width="37.0" height="20.8" fill="#a8a8a8" fill-opacity="0.72"/>
<rect x="841.4" y="688.9" width="43.7" height="20.8" fill="#a8a8a8" fill-opacity="0.72"/>
<rect x="651.1" y="762.6" width="44.1" height="20.8" fill="#a8a8a8" fill-opacity="0.72"/>
<rect x="774.8" y="773.0" width="37.4" height="20.8" fill="#a8a8a8" fill-opacity="0.72"/>
<rect x="634.9" y="818.0" width="44.9" height="20.8" fill="#a8a8a8" fill-opacity="0.72"/><path d="M935.5 348.6 L960.5 331.8" stroke="#66e01a" stroke-width="1.7" fill="none"/>
<path d="M928.5 345.8 C922 345 919.5 353 920.5 361 C921.2 366.5 923 370 924.5 371 L927.3 356 C927 352 928.5 348.5 931 349 C933 349.5 933.5 352.5 932 356.5 L935.5 355 C937.5 350.5 934.5 346 928.5 345.8Z" fill="#66e01a"/>
<path d="M918 360.5 L924.5 372.5 L925.8 363Z" fill="#5a9a30"/>
<path d="M794.1 668.1 L799.9 664.5 L799.9 686.8 L798.3 691 L793.6 690.5 L795.2 686.8Z" fill="#66e01a" stroke="#58b020" stroke-width="0.6"/>
<path d="M814 691 L836.5 705.5" stroke="#66e01a" stroke-width="2.1" fill="none"/>
<path d="M750.5 758.5 L768.5 784" stroke="#66e01a" stroke-width="2.1" fill="none"/><path d="M770.5 787.5 L762 779.5 L767.5 775.8Z" fill="#66e01a"/>
<path d="M636 790.3 L643.5 785.4 L648.5 788.9 L644.5 792.3 L647.5 793.8 L643.5 798.3 L648.5 802.3 L643.5 806.8 L636 811.3Z" fill="#f21414"/>
<path d="M637 797.5 L644.5 792.3 M637 804 L643.5 798.3" stroke="#c40c0c" stroke-width="1" fill="none"/>
<circle cx="640" cy="805.3" r="1.1" fill="#ffd8d8"/>
<path d="M636.2 815.5 L637.4 816.2 L637 818.6 L636 818Z" fill="#f21414"/><text x="969.6" y="322.2" font-size="17" fill="#2a2a2a" stroke="#2a2a2a" stroke-width="0.45" textLength="30.9" lengthAdjust="spacingAndGlyphs">20.0</text>
<text x="933.0" y="341.0" font-size="17" fill="#2a2a2a" stroke="#2a2a2a" stroke-width="0.45" textLength="37.1" lengthAdjust="spacingAndGlyphs">-70.0</text>
<text x="926.7" y="370.9" font-size="17" fill="#2a2a2a" stroke="#2a2a2a" stroke-width="0.45" textLength="30.9" lengthAdjust="spacingAndGlyphs">30.0</text>
<text x="801.0" y="691.6" font-size="17" fill="#2a2a2a" stroke="#2a2a2a" stroke-width="0.45" textLength="30.4" lengthAdjust="spacingAndGlyphs">50.0</text>
<text x="844.7" y="705.3" font-size="17" fill="#2a2a2a" stroke="#2a2a2a" stroke-width="0.45" textLength="37.1" lengthAdjust="spacingAndGlyphs">-20.0</text>
<text x="654.4" y="779.0" font-size="17" fill="#2a2a2a" stroke="#2a2a2a" stroke-width="0.45" textLength="37.5" lengthAdjust="spacingAndGlyphs">-20.0</text>
<text x="778.1" y="789.4" font-size="17" fill="#2a2a2a" stroke="#2a2a2a" stroke-width="0.45" textLength="30.8" lengthAdjust="spacingAndGlyphs">50.0</text>
<text x="638.2" y="834.4" font-size="17" fill="#2a2a2a" stroke="#2a2a2a" stroke-width="0.45" textLength="38.3" lengthAdjust="spacingAndGlyphs">110.0</text><g>
<path d="M517 836 L517 826" stroke="#ff5a1a" stroke-width="2.8"/><path d="M513.2 827.8 L517 818 L520.8 827.8Z" fill="#ff5a1a"/>
<path d="M517 837.5 L529 829.2" stroke="#555" stroke-width="2.8"/><path d="M537.3 823.3 L526.2 826.2 L530.8 833.2Z" fill="#555"/>
<path d="M517 838 L529 846.2" stroke="#777" stroke-width="2.8"/><path d="M537 851.6 L530.6 842.6 L526 849.4Z" fill="#777"/>
<circle cx="516.3" cy="838.2" r="3.3" fill="#6a6a6a"/>
<g font-size="12" fill="#555"><text x="519.2" y="814.6">Z</text><text x="538.4" y="820.2">Y</text><text x="538.6" y="848.2">X</text></g>
</g></g>
<path d="M112.6 128.4 H124.8 V116.2 M131 116.2 H124.8 L112.6 128.4 V155.0 H146.2 V131" fill="none" stroke="#141414" stroke-width="1.7" stroke-linejoin="miter"/>
<path d="M138.2 116 H153.6 M145.9 108.5 V124" fill="none" stroke="#f37021" stroke-width="1.6" />
<path d="M167.8 127.80000000000001 H179.20000000000002 V116.4 M199.4 116.4 H179.20000000000002 L167.8 127.80000000000001 V153.8 H199.4 V116.4 H199.4" fill="none" stroke="#141414" stroke-width="1.7" stroke-linejoin="miter"/>
<path d="M186 108.6 H207 V148.3" fill="none" stroke="#f37021" stroke-width="1.6" />
<path d="M247.6 110 L241.2 116.4 L247.6 122.8 M241.2 116.4 H267.5 A19.55 19.55 0 0 1 267.5 155.5 H241.5" fill="none" stroke="#141414" stroke-width="1.7" />
<path d="M335 110 L341.4 116.4 L335 122.8 M341.4 116.4 H314 A19.55 19.55 0 0 0 314 155.5 H340" fill="none" stroke="#b4b4b4" stroke-width="1.4" />
<path d="M348.6 145.5 V155.2 H395.2 V145.5" fill="none" stroke="#141414" stroke-width="1.7" />
<path d="M372.6 108 V144.5 M366 138 L372.6 144.7 L379.2 138" fill="none" stroke="#f37021" stroke-width="1.6" />
<path d="M423.2 120.4 H434.4 V109.2 M449.7 109.2 H434.4 L423.2 120.4 V154.8 H462.6 V129" fill="none" stroke="#141414" stroke-width="1.7" stroke-linejoin="miter"/>
<path d="M462.8 123.5 V109 M456.5 115.2 L462.8 109 L469 115.2" fill="none" stroke="#f37021" stroke-width="1.6" />
<path d="M433 131.4 V146.0" fill="none" stroke="#141414" stroke-width="2.0" stroke-linejoin="miter"/><path d="M441.2 146.0 V131.4 H447.5 M441.2 138.262 H446.366" fill="none" stroke="#141414" stroke-width="2.0" stroke-linejoin="miter"/><path d="M457.40000000000003 135.8 V134.20000000000002 A2.8 2.8 0 0 0 451.8 134.20000000000002 V143.2 A2.8 2.8 0 0 0 457.40000000000003 143.2 V141.6" fill="none" stroke="#141414" stroke-width="2.0" stroke-linejoin="miter"/>
<path d="M547.8 145.1 A22 22 0 1 1 545.8 116.9" fill="none" stroke="#b4b4b4" stroke-width="1.4" />
<path d="M541.5 119.8 H551.8 V109.5" fill="none" stroke="#b4b4b4" stroke-width="1.4" />
<path d="M581.8 122.3 V115.8 L589 109.2 H608.5 V122.3 M581.8 115.8 H589 V109.2 M578.5 149.6 H571.9 V122.6 H618 V149.6 H611 M578.5 135 H611 V154.8 H578.5 Z M584.2 140.7 H605.7 M584.2 146.3 H601.2" fill="none" stroke="#141414" stroke-width="1.7" />
<rect x="604.4" y="127.2" width="2.5" height="2.5" fill="#141414"/><rect x="609.3" y="127.2" width="2.5" height="2.5" fill="#141414"/>
<path d="M634.2 119.7 H644.7 V109.2 M674.0 109.2 H644.7 L634.2 119.7 V154.8 H674.0 V109.2 H674.0" fill="none" stroke="#141414" stroke-width="1.7" stroke-linejoin="miter"/>
<circle cx="656.8" cy="134.4" r="8.3" fill="none" stroke="#141414" stroke-width="1.7"/>
<path d="M651 140.5 L643.6 147.8" fill="none" stroke="#141414" stroke-width="1.7" />
<path d="M694.1 119.7 H704.6 V109.2 M733.9 109.2 H704.6 L694.1 119.7 V154.8 H733.9 V109.2 H733.9" fill="none" stroke="#141414" stroke-width="1.7" stroke-linejoin="miter"/>
<path d="M701.6 131.4 H704.7 A3.1 3.1 0 0 1 707.8000000000001 134.5 V142.9 A3.1 3.1 0 0 1 704.7 146.0 H701.6 Z" fill="none" stroke="#141414" stroke-width="2.0" stroke-linejoin="miter"/><path d="M712.4 134.5 A3.1 3.1 0 0 1 718.6 134.5 V142.9 A3.1 3.1 0 0 1 712.4 142.9 Z" fill="none" stroke="#141414" stroke-width="2.0" stroke-linejoin="miter"/><path d="M728.6 135.8 V134.20000000000002 A2.8 2.8 0 0 0 723 134.20000000000002 V143.2 A2.8 2.8 0 0 0 728.6 143.2 V141.6" fill="none" stroke="#141414" stroke-width="2.0" stroke-linejoin="miter"/>
<path d="M748 119.7 H758.5 V109.2 M788 109.2 H758.5 L748 119.7 V154.8 H788 V109.2 H788" fill="none" stroke="#141414" stroke-width="1.7" stroke-linejoin="miter"/>
<path d="M755.4 146.0 V131.4 H758.5 A3.1 3.1 0 0 1 761.6 134.5 V135.89200000000002 A3.1 3.1 0 0 1 758.5 138.99200000000002 H755.4" fill="none" stroke="#141414" stroke-width="2.0" stroke-linejoin="miter"/><path d="M766.4 131.4 H769.5 A3.1 3.1 0 0 1 772.6 134.5 V142.9 A3.1 3.1 0 0 1 769.5 146.0 H766.4 Z" fill="none" stroke="#141414" stroke-width="2.0" stroke-linejoin="miter"/><path d="M777.5 146.0 V131.4 H782.3 M777.5 138.262 H781.436" fill="none" stroke="#141414" stroke-width="2.0" stroke-linejoin="miter"/>
<path d="M802.6 119.7 H813.1 V109.2 M841.6 109.2 H813.1 L802.6 119.7 V154.8 H841.6 V109.2 H841.6" fill="none" stroke="#141414" stroke-width="1.7" stroke-linejoin="miter"/>
<path d="M809.8 131.4 H812.9 A3.1 3.1 0 0 1 816.0 134.5 V142.9 A3.1 3.1 0 0 1 812.9 146.0 H809.8 Z" fill="none" stroke="#141414" stroke-width="2.0" stroke-linejoin="miter"/><path d="M819.6 131.4 L826.6 146.0 M826.6 131.4 L819.6 146.0" fill="none" stroke="#141414" stroke-width="2.0" stroke-linejoin="miter"/><path d="M830.8 146.0 V131.4 H835.4 M830.8 138.262 H834.572" fill="none" stroke="#141414" stroke-width="2.0" stroke-linejoin="miter"/>
<path d="M869 108.8 H917 M869 117.8 H917 M869 126.8 H917 M869 135.7 H917 M869 144.7 H897.2" fill="none" stroke="#141414" stroke-width="1.7" />
<path d="M927.1 121.2 H939.1 V109.2 M967.3 109.2 H939.1 L927.1 121.2 V154.5 H967.3 V109.2 H967.3" fill="none" stroke="#141414" stroke-width="1.7" stroke-linejoin="miter"/>
<path d="M934 137.3 H960.3 M934 145.9 H954.4" fill="none" stroke="#141414" stroke-width="1.7" />
<path d="M1004.5 117.5 L1010.3 109.2 H1032.2 V148.8 H1021" fill="none" stroke="#141414" stroke-width="1.7" />
<path d="M986.3 127.0 H997.5999999999999 V115.7 M1019.8 115.7 H997.5999999999999 L986.3 127.0 V154.5 H1019.8 V115.7 H1019.8" fill="none" stroke="#141414" stroke-width="1.7" stroke-linejoin="miter"/>
<path d="M991.5 137.3 H1014.9 M991.5 145.9 H1010" fill="none" stroke="#141414" stroke-width="1.7" />
<rect x="1049.8" y="108.30000000000001" width="9.6" height="9.6" fill="none" stroke="#141414" stroke-width="1.7"/>
<path d="M1064.7 108.9 H1095.9 M1064.7 114.7 H1083.8" fill="none" stroke="#141414" stroke-width="1.7" />
<rect x="1049.8" y="126.2" width="9.6" height="9.6" fill="none" stroke="#141414" stroke-width="1.7"/>
<path d="M1064.7 126.8 H1095.9 M1064.7 132.6 H1083.8" fill="none" stroke="#141414" stroke-width="1.7" />
<rect x="1049.8" y="144.1" width="9.6" height="9.6" fill="none" stroke="#141414" stroke-width="1.7"/>
<path d="M1064.7 144.7 H1095.9 M1064.7 150.5 H1083.8" fill="none" stroke="#141414" stroke-width="1.7" />
<rect x="1132.6" y="108.4" width="9.6" height="9.6" fill="none" stroke="#141414" stroke-width="1.8"/>
<rect x="1152.2" y="108.4" width="9.6" height="9.6" fill="none" stroke="#141414" stroke-width="1.8"/>
<rect x="1132.6" y="126.3" width="9.6" height="9.6" fill="none" stroke="#f37021" stroke-width="1.8"/>
<rect x="1152.2" y="126.3" width="9.6" height="9.6" fill="none" stroke="#141414" stroke-width="1.8"/>
<rect x="1132.6" y="144.2" width="9.6" height="9.6" fill="none" stroke="#141414" stroke-width="1.8"/>
<rect x="1152.2" y="144.2" width="9.6" height="9.6" fill="none" stroke="#141414" stroke-width="1.8"/>
<rect x="1192.7" y="108.4" width="9.6" height="9.6" fill="none" stroke="#f37021" stroke-width="1.8"/>
<rect x="1212.3" y="108.4" width="9.6" height="9.6" fill="none" stroke="#f37021" stroke-width="1.8"/>
<rect x="1192.7" y="126.3" width="9.6" height="9.6" fill="none" stroke="#f37021" stroke-width="1.8"/>
<rect x="1212.3" y="126.3" width="9.6" height="9.6" fill="none" stroke="#f37021" stroke-width="1.8"/>
<rect x="1192.7" y="144.2" width="9.6" height="9.6" fill="none" stroke="#f37021" stroke-width="1.8"/>
<rect x="1212.3" y="144.2" width="9.6" height="9.6" fill="none" stroke="#f37021" stroke-width="1.8"/>
<rect x="1254.2" y="108.4" width="9.6" height="9.6" fill="none" stroke="#141414" stroke-width="1.8"/>
<rect x="1273.8" y="108.4" width="9.6" height="9.6" fill="none" stroke="#f37021" stroke-width="1.8"/>
<rect x="1254.2" y="126.3" width="9.6" height="9.6" fill="none" stroke="#f37021" stroke-width="1.8"/>
<rect x="1273.8" y="126.3" width="9.6" height="9.6" fill="none" stroke="#141414" stroke-width="1.8"/>
<rect x="1254.2" y="144.2" width="9.6" height="9.6" fill="none" stroke="#141414" stroke-width="1.8"/>
<rect x="1273.8" y="144.2" width="9.6" height="9.6" fill="none" stroke="#f37021" stroke-width="1.8"/>
<rect x="2405.4" y="31" width="13.4" height="2.8" fill="#111"/>
<rect x="2447.3" y="22.2" width="11.6" height="10.4" fill="none" stroke="#111" stroke-width="2.2"/><rect x="2446.2" y="20.4" width="13.8" height="3" fill="#111"/>
<path d="M2487.5 20.5 L2500.5 33.5 M2500.5 20.5 L2487.5 33.5" stroke="#111" stroke-width="3.2" fill="none"/>
<circle cx="2494" cy="57" r="1.8" fill="#111"/><rect x="2492.4" y="60.6" width="3.2" height="8.8" rx="1" fill="#111"/>
<circle cx="2365.2" cy="60.8" r="7" fill="none" stroke="#bdbdbd" stroke-width="3"/><path d="M2370.5 66 L2381 76.5" stroke="#bdbdbd" stroke-width="3.4"/>
<path d="M1868.7 257.3 L1874.4 251.3 L1880.1 257.3z" fill="#404040"/>
<path d="M1868.7 1541 L1874.4 1547 L1880.1 1541z" fill="#404040"/>
<g transform="translate(0,37.9) skewX(-18.7) translate(0,-37.9)"><rect x="21.5" y="10" width="93.2" height="27.9" rx="3.5" fill="#f37021"/><rect x="25.2" y="13.4" width="85.8" height="21.1" rx="1.5" fill="#0c0c0c"/><rect x="36.4" y="13.4" width="1.5" height="21.1" fill="#f37021"/><rect x="58.6" y="13.4" width="1.5" height="21.1" fill="#f37021"/><rect x="88.2" y="13.4" width="1.5" height="21.1" fill="#f37021"/><rect x="25.2" y="13.4" width="3.6" height="21.1" fill="#f37021"/><rect x="43.4" y="18" width="8.2" height="12" fill="#f37021"/><rect x="68.5" y="18" width="19.7" height="3.6" fill="#f37021"/><rect x="66" y="25.6" width="17" height="3.6" fill="#f37021"/><rect x="95.5" y="18" width="10.8" height="3.6" fill="#f37021"/><rect x="94.5" y="25.6" width="11.8" height="3.6" fill="#f37021"/></g>
<text x="1256.0" y="32.0" font-size="20" fill="#e8e8e8" font-weight="normal" font-style="normal" text-anchor="middle" textLength="52.0" lengthAdjust="spacingAndGlyphs">C 258</text>
<text x="127.5" y="35.5" font-size="31" fill="#fff" font-weight="bold" font-style="italic" text-anchor="start" textLength="106.0" lengthAdjust="spacingAndGlyphs">StatiCa</text>
<text x="236.0" y="19.0" font-size="11" fill="#ddd" font-weight="normal" font-style="normal" text-anchor="start" textLength="10.0" lengthAdjust="spacingAndGlyphs">®</text>
<text x="272.0" y="33.2" font-size="26" fill="#fff" font-weight="normal" font-style="italic" text-anchor="start" textLength="165.0" lengthAdjust="spacingAndGlyphs" stroke="#fff" stroke-width="0.6">CONNECTION</text>
<text x="21.0" y="63.0" font-size="14.5" fill="#fff" font-weight="bold" font-style="italic" text-anchor="start" textLength="220.0" lengthAdjust="spacingAndGlyphs">Calculate yesterday's estimates</text>
<text x="369.8" y="75.6" font-size="17.5" fill="#fff" font-weight="bold" font-style="normal" text-anchor="start" textLength="59.0" lengthAdjust="spacingAndGlyphs">Project</text>
<text x="526.0" y="75.6" font-size="17.5" fill="#fff" font-weight="bold" font-style="normal" text-anchor="start" textLength="57.0" lengthAdjust="spacingAndGlyphs">Design</text>
<text x="683.0" y="75.6" font-size="17.5" fill="#fff" font-weight="bold" font-style="normal" text-anchor="start" textLength="53.0" lengthAdjust="spacingAndGlyphs">Check</text>
<text x="834.3" y="75.6" font-size="17.5" fill="#fff" font-weight="bold" font-style="normal" text-anchor="start" textLength="58.7" lengthAdjust="spacingAndGlyphs">Report</text>
<text x="978.6" y="75.6" font-size="17.5" fill="#fff" font-weight="bold" font-style="normal" text-anchor="start" textLength="78.1" lengthAdjust="spacingAndGlyphs">Materials</text>
<text x="19.0" y="133.5" font-size="17.5" fill="#fff" font-weight="normal" font-style="normal" text-anchor="start" textLength="46.0" lengthAdjust="spacingAndGlyphs">C 258</text>
<path d="M81.5 124.5 h9 l-4.5 4.5z" fill="#fff"/>
<text x="115.0" y="177.6" font-size="17.5" fill="#000" font-weight="normal" font-style="normal" text-anchor="start" textLength="34.0" lengthAdjust="spacingAndGlyphs">New</text>
<text x="164.5" y="177.6" font-size="17.5" fill="#000" font-weight="normal" font-style="normal" text-anchor="start" textLength="42.0" lengthAdjust="spacingAndGlyphs">Copy</text>
<text x="241.7" y="177.6" font-size="17.5" fill="#000" font-weight="normal" font-style="normal" text-anchor="start" textLength="42.3" lengthAdjust="spacingAndGlyphs">Undo</text>
<text x="297.0" y="177.6" font-size="17.5" fill="#d2d2d2" font-weight="normal" font-style="normal" text-anchor="start" textLength="39.0" lengthAdjust="spacingAndGlyphs">Redo</text>
<text x="352.6" y="177.6" font-size="17.5" fill="#000" font-weight="normal" font-style="normal" text-anchor="start" textLength="35.8" lengthAdjust="spacingAndGlyphs">Save</text>
<text x="433.7" y="177.6" font-size="17.5" fill="#000" font-weight="normal" font-style="normal" text-anchor="start" textLength="22.3" lengthAdjust="spacingAndGlyphs">IFC</text>
<text x="494.6" y="177.6" font-size="17.5" fill="#d6d6d6" font-weight="normal" font-style="normal" text-anchor="start" textLength="69.0" lengthAdjust="spacingAndGlyphs">Generate</text>
<text x="577.7" y="177.6" font-size="17.5" fill="#000" font-weight="normal" font-style="normal" text-anchor="start" textLength="34.2" lengthAdjust="spacingAndGlyphs">Print</text>
<text x="624.2" y="177.6" font-size="17.5" fill="#000" font-weight="normal" font-style="normal" text-anchor="start" textLength="58.0" lengthAdjust="spacingAndGlyphs">Preview</text>
<text x="695.5" y="177.6" font-size="17.5" fill="#000" font-weight="normal" font-style="normal" text-anchor="start" textLength="35.5" lengthAdjust="spacingAndGlyphs">DOC</text>
<text x="752.0" y="177.6" font-size="17.5" fill="#000" font-weight="normal" font-style="normal" text-anchor="start" textLength="30.3" lengthAdjust="spacingAndGlyphs">PDF</text>
<text x="806.6" y="177.6" font-size="17.5" fill="#000" font-weight="normal" font-style="normal" text-anchor="start" textLength="29.8" lengthAdjust="spacingAndGlyphs">DXF</text>
<text x="876.7" y="176.9" font-size="17.5" fill="#000" font-weight="normal" font-style="normal" text-anchor="start" textLength="34.2" lengthAdjust="spacingAndGlyphs">Brief</text>
<text x="931.6" y="176.9" font-size="17.5" fill="#000" font-weight="normal" font-style="normal" text-anchor="start" textLength="31.6" lengthAdjust="spacingAndGlyphs">One</text>
<text x="977.8" y="176.9" font-size="17.5" fill="#000" font-weight="normal" font-style="normal" text-anchor="start" textLength="63.1" lengthAdjust="spacingAndGlyphs">Detailed</text>
<text x="1053.0" y="176.9" font-size="17.5" fill="#000" font-weight="normal" font-style="normal" text-anchor="start" textLength="38.0" lengthAdjust="spacingAndGlyphs">BOM</text>
<text x="1119.3" y="176.9" font-size="17.5" fill="#000" font-weight="normal" font-style="normal" text-anchor="start" textLength="57.0" lengthAdjust="spacingAndGlyphs">Current</text>
<text x="1197.8" y="176.9" font-size="17.5" fill="#000" font-weight="normal" font-style="normal" text-anchor="start" textLength="18.6" lengthAdjust="spacingAndGlyphs">All</text>
<text x="1237.4" y="176.9" font-size="17.5" fill="#000" font-weight="normal" font-style="normal" text-anchor="start" textLength="64.4" lengthAdjust="spacingAndGlyphs">Selected</text>
<text x="928.0" y="201.6" font-size="17.5" fill="#000" font-weight="normal" font-style="normal" text-anchor="start" textLength="38.5" lengthAdjust="spacingAndGlyphs">page</text>
<text x="56.0" y="229.8" font-size="17.5" fill="#f9b48b" font-weight="bold" font-style="normal" text-anchor="start" textLength="110.0" lengthAdjust="spacingAndGlyphs">Project items</text>
<text x="299.7" y="229.8" font-size="17.5" fill="#a8a8a8" font-weight="normal" font-style="normal" text-anchor="start" textLength="34.8" lengthAdjust="spacingAndGlyphs">Data</text>
<text x="420.0" y="229.8" font-size="17.5" fill="#a8a8a8" font-weight="normal" font-style="normal" text-anchor="start" textLength="49.8" lengthAdjust="spacingAndGlyphs">Export</text>
<text x="625.0" y="229.8" font-size="17.5" fill="#a8a8a8" font-weight="normal" font-style="normal" text-anchor="start" textLength="91.5" lengthAdjust="spacingAndGlyphs">Report view</text>
<text x="925.7" y="229.8" font-size="17.5" fill="#a8a8a8" font-weight="normal" font-style="normal" text-anchor="start" textLength="112.1" lengthAdjust="spacingAndGlyphs">Type of report</text>
<text x="1152.0" y="229.8" font-size="17.5" fill="#a8a8a8" font-weight="normal" font-style="normal" text-anchor="start" textLength="115.7" lengthAdjust="spacingAndGlyphs">Items in report</text>
<text x="2471.7" y="261.0" font-size="18" fill="#1565c0" font-weight="normal" font-style="normal" text-anchor="start" textLength="41.3" lengthAdjust="spacingAndGlyphs" text-decoration="underline">Reset</text>
<path d="M2471.7 263.5 H2513" stroke="#1565c0" stroke-width="1.3"/>
<text x="1946.7" y="300.0" font-size="20.5" fill="#f26a1b" font-weight="bold" font-style="normal" text-anchor="start" textLength="64.2" lengthAdjust="spacingAndGlyphs">Report</text>
<path d="M1927 288.5 V297 H1918.5z" fill="#3c3c3c"/>
<text x="1976.4" y="333.8" font-size="18.5" fill="#404040" font-weight="normal" font-style="normal" text-anchor="start" textLength="92.9" lengthAdjust="spacingAndGlyphs">Project data</text>
<text x="1976.4" y="369.8" font-size="18.5" fill="#404040" font-weight="normal" font-style="normal" text-anchor="start" textLength="78.8" lengthAdjust="spacingAndGlyphs">Paragraph</text>
<text x="1976.4" y="405.8" font-size="18.5" fill="#404040" font-weight="normal" font-style="normal" text-anchor="start" textLength="70.0" lengthAdjust="spacingAndGlyphs">Materials</text>
<text x="1976.4" y="441.8" font-size="18.5" fill="#404040" font-weight="normal" font-style="normal" text-anchor="start" textLength="100.8" lengthAdjust="spacingAndGlyphs">Project items</text>
<text x="1976.4" y="513.8" font-size="18.5" fill="#404040" font-weight="normal" font-style="normal" text-anchor="start" textLength="107.9" lengthAdjust="spacingAndGlyphs">Code settings</text>
<text x="1976.4" y="549.8" font-size="18.5" fill="#404040" font-weight="normal" font-style="normal" text-anchor="start" textLength="185.0" lengthAdjust="spacingAndGlyphs">Theoretical background</text>
<text x="1976.4" y="585.8" font-size="18.5" fill="#404040" font-weight="normal" font-style="normal" text-anchor="start" textLength="105.1" lengthAdjust="spacingAndGlyphs">Software info</text>
<text x="2006.0" y="477.8" font-size="18.5" fill="#404040" font-weight="normal" font-style="normal" text-anchor="start" textLength="45.2" lengthAdjust="spacingAndGlyphs">C 258</text>
<path d="M1952.5 310.5 V580.2 H1967.5 M1952.5 328 H1967.5 M1952.5 364 H1967.5 M1952.5 400 H1967.5 M1952.5 436 H1967.5 M1952.5 508 H1967.5 M1952.5 544 H1967.5 M1980.5 454.5 V472.3 H1997.5" fill="none" stroke="#a0a0a0" stroke-width="1.4"/>
<path d="M1956.5 432 V441 H1948.5z" fill="#3c3c3c"/>
<rect x="2311" y="316" width="16" height="16" rx="3" fill="#e2e2e2"/>
<path d="M2315.5 324.5 L2320.2 329.2 L2331.2 315" fill="none" stroke="#f7931e" stroke-width="3" stroke-linejoin="miter"/>
<rect x="2311" y="388" width="16" height="16" rx="3" fill="#e2e2e2"/>
<path d="M2315.5 396.5 L2320.2 401.2 L2331.2 387" fill="none" stroke="#f7931e" stroke-width="3" stroke-linejoin="miter"/>
<rect x="2311" y="496" width="16" height="16" rx="3" fill="#e2e2e2"/>
<path d="M2315.5 504.5 L2320.2 509.2 L2331.2 495" fill="none" stroke="#f7931e" stroke-width="3" stroke-linejoin="miter"/>
<rect x="2311" y="532" width="16" height="16" rx="3" fill="#e2e2e2"/>
<rect x="2311" y="568" width="16" height="16" rx="3" fill="#e2e2e2"/>
<text x="1906.3" y="1163.0" font-size="20.5" fill="#f26a1b" font-weight="bold" font-style="normal" text-anchor="start" textLength="205.6" lengthAdjust="spacingAndGlyphs">Project items settings</text>
<text x="1906.3" y="1205.0" font-size="18.5" fill="#404040" font-weight="normal" font-style="normal" text-anchor="start" textLength="130.3" lengthAdjust="spacingAndGlyphs">Report language</text>
<rect x="2079" y="1182" width="190" height="28" fill="#fff" stroke="#d4d4d4" stroke-width="1.5"/>
<text x="2083.8" y="1203.0" font-size="18.5" fill="#000" font-weight="normal" font-style="normal" text-anchor="start" textLength="146.0" lengthAdjust="spacingAndGlyphs">Acc. to application</text>
<path d="M2248 1193.5 L2254 1199.5 L2260 1193.5" fill="none" stroke="#222" stroke-width="1.5"/>
<text x="1906.3" y="1243.0" font-size="18.5" fill="#404040" font-weight="normal" font-style="normal" text-anchor="start" textLength="141.2" lengthAdjust="spacingAndGlyphs">Drawings - model</text>
<text x="1906.3" y="1327.3" font-size="18.5" fill="#404040" font-weight="normal" font-style="normal" text-anchor="start" textLength="141.2" lengthAdjust="spacingAndGlyphs">Drawings - results</text>
<text x="1906.3" y="1369.4" font-size="18.5" fill="#404040" font-weight="normal" font-style="normal" text-anchor="start" textLength="111.1" lengthAdjust="spacingAndGlyphs">Bill of material</text>
<text x="1906.3" y="1411.6" font-size="18.5" fill="#404040" font-weight="normal" font-style="normal" text-anchor="start" textLength="123.1" lengthAdjust="spacingAndGlyphs">Cost estimation</text>
<text x="1906.3" y="1453.7" font-size="18.5" fill="#404040" font-weight="normal" font-style="normal" text-anchor="start" textLength="71.9" lengthAdjust="spacingAndGlyphs">Formulas</text>
<text x="1906.3" y="1495.8" font-size="18.5" fill="#404040" font-weight="normal" font-style="normal" text-anchor="start" textLength="98.2" lengthAdjust="spacingAndGlyphs">Explanations</text>
<text x="1906.3" y="1538.0" font-size="18.5" fill="#404040" font-weight="normal" font-style="normal" text-anchor="start" textLength="104.8" lengthAdjust="spacingAndGlyphs">Picture colors</text>
<text x="36.6" y="1592.3" font-size="17.5" fill="#8a8a8a" font-weight="bold" font-style="normal" text-anchor="start" textLength="108.4" lengthAdjust="spacingAndGlyphs">Design code:</text>
<text x="152.3" y="1592.3" font-size="17.5" fill="#fff" font-weight="bold" font-style="normal" text-anchor="start" textLength="23.5" lengthAdjust="spacingAndGlyphs">EN</text>
<text x="207.2" y="1592.3" font-size="17.5" fill="#8a8a8a" font-weight="bold" font-style="normal" text-anchor="start" textLength="75.4" lengthAdjust="spacingAndGlyphs">Analysis:</text>
<text x="289.4" y="1592.3" font-size="17.5" fill="#fff" font-weight="bold" font-style="normal" text-anchor="start" textLength="107.3" lengthAdjust="spacingAndGlyphs">Stress, strain</text>
<text x="428.0" y="1592.3" font-size="17.5" fill="#8a8a8a" font-weight="bold" font-style="normal" text-anchor="start" textLength="108.9" lengthAdjust="spacingAndGlyphs">Load effects:</text>
<text x="544.2" y="1592.3" font-size="17.5" fill="#fff" font-weight="bold" font-style="normal" text-anchor="start" textLength="118.3" lengthAdjust="spacingAndGlyphs">In equilibrium</text>
<text x="694.4" y="1592.3" font-size="17.5" fill="#8a8a8a" font-weight="bold" font-style="normal" text-anchor="start" textLength="48.6" lengthAdjust="spacingAndGlyphs">Units:</text>
<text x="756.0" y="1592.3" font-size="17.5" fill="#fff" font-weight="bold" font-style="normal" text-anchor="start" textLength="31.5" lengthAdjust="spacingAndGlyphs">mm</text>
<text x="2339.5" y="1592" font-size="18" textLength="164.3" lengthAdjust="spacingAndGlyphs"><tspan fill="#f37021">www.</tspan><tspan fill="#fff">ideastatica</tspan><tspan fill="#f37021">.com</tspan></text>
<rect x="784.2" y="47" width="155.6" height="45.3" rx="17" fill="none" stroke="#fb0007" stroke-width="4.4"/>
<rect x="482.3" y="90.2" width="93.6" height="112.8" rx="18" fill="none" stroke="#fb0007" stroke-width="4.5"/>
</svg>
</body></html>
